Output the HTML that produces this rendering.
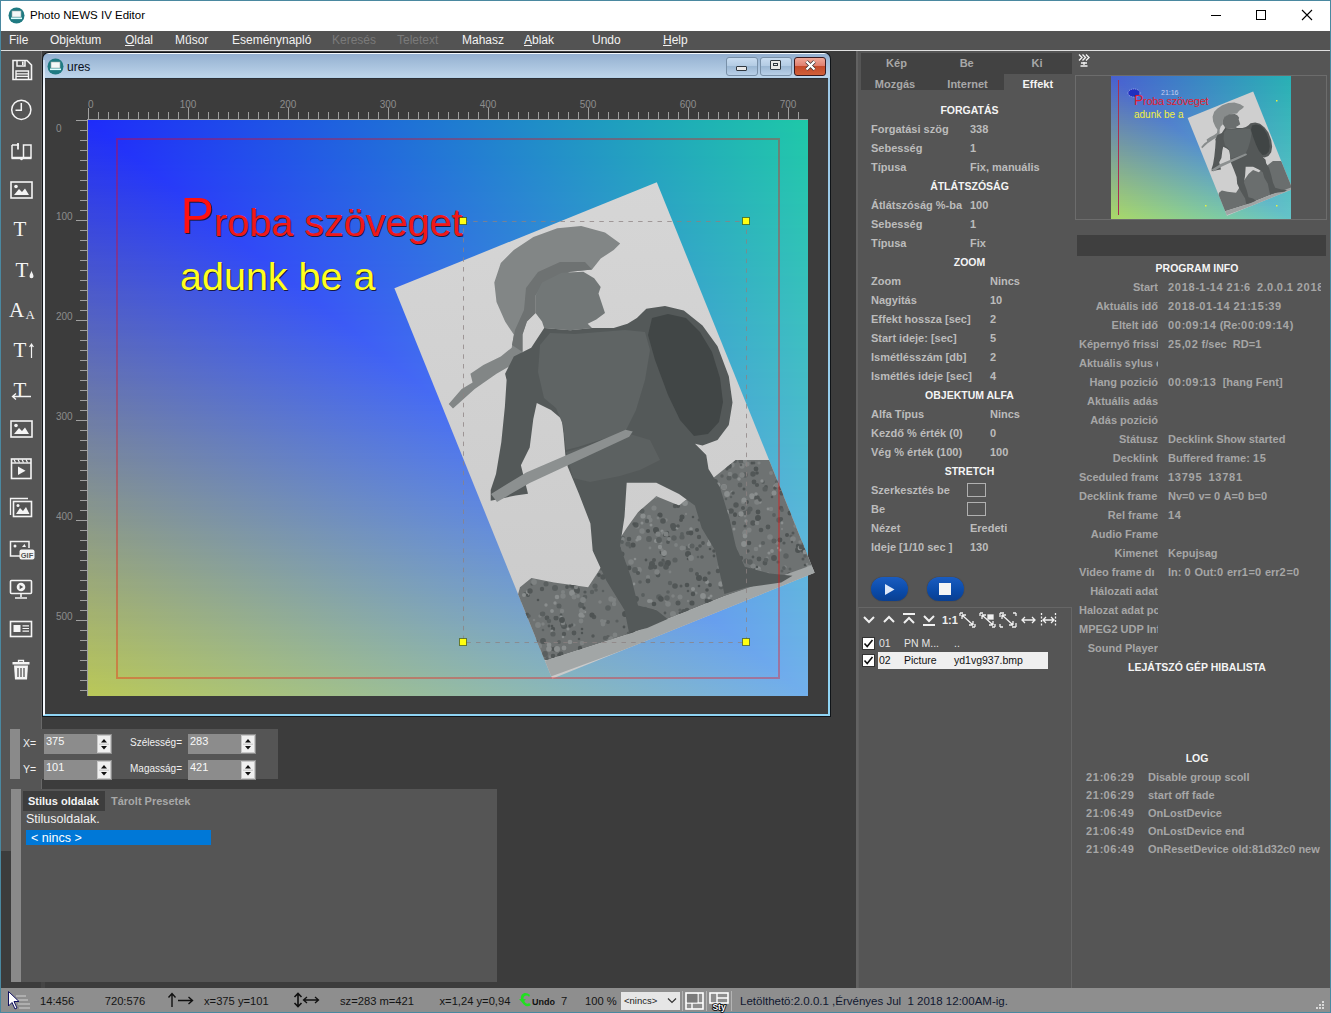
<!DOCTYPE html><html><head><meta charset="utf-8"><title>Photo NEWS IV Editor</title><style>
*{margin:0;padding:0;box-sizing:border-box}
html,body{width:1331px;height:1013px;overflow:hidden;background:#3c3c3c;font-family:"Liberation Sans",sans-serif;position:relative}
.a{position:absolute}
.t{position:absolute;white-space:nowrap;line-height:14px;font-size:12px}
.b{font-weight:bold}
.pl{position:absolute;white-space:nowrap;line-height:14px;font-size:11px;font-weight:bold;color:#bcbcbc}
.ph{position:absolute;white-space:nowrap;line-height:14px;font-size:10.5px;font-weight:bold;color:#f4f4f4;text-align:center}
.il{position:absolute;white-space:pre;line-height:14px;font-size:11px;font-weight:bold;color:#a6a6a6}
svg{position:absolute;overflow:visible}
</style></head><body>
<div class="a" style="left:0px;top:0px;width:1331px;height:1013px;background:#4a88a0;"></div>
<div class="a" style="left:1px;top:1px;width:1329px;height:1011px;background:#3c3c3c;"></div>
<div class="a" style="left:1px;top:1px;width:1329px;height:30px;background:#fff;"></div>
<svg style="left:8px;top:7px" width="17" height="17" viewBox="0 0 17 17">
<circle cx="8.5" cy="8.5" r="8" fill="#1f7a82"/>
<rect x="4" y="4" width="9" height="6" fill="#f4f8f8" stroke="#9aa" stroke-width="0.6"/>
<rect x="3" y="10.5" width="11" height="1.6" fill="#dff"/>
</svg>
<div class="t" style="left:30px;top:8px;color:#000;font-size:11.5px;">Photo NEWS IV Editor</div>
<div class="a" style="left:1211px;top:15px;width:10px;height:1px;background:#000;"></div>
<div class="a" style="left:1256px;top:10px;width:10px;height:10px;background:transparent;border:1px solid #000"></div>
<svg style="left:1301px;top:9.3px" width="12" height="12" viewBox="0 0 12 12"><path d="M1 1L11 11M11 1L1 11" stroke="#000" stroke-width="1.1"/></svg>
<div class="a" style="left:1px;top:31px;width:1329px;height:19px;background:#535353;"></div>
<div class="a" style="left:1px;top:50px;width:1329px;height:1px;background:#e0e0e0;"></div>
<div class="t" style="left:9px;top:33px;color:#f2f2f2;font-size:12px;">File</div>
<div class="t" style="left:50px;top:33px;color:#f2f2f2;font-size:12px;">Objektum</div>
<div class="t" style="left:125px;top:33px;color:#f2f2f2;font-size:12px;"><span style="text-decoration:underline">O</span>ldal</div>
<div class="t" style="left:175px;top:33px;color:#f2f2f2;font-size:12px;">Műsor</div>
<div class="t" style="left:232px;top:33px;color:#f2f2f2;font-size:12px;">Eseménynapló</div>
<div class="t" style="left:332px;top:33px;color:#7a7a7a;font-size:12px;">Keresés</div>
<div class="t" style="left:397px;top:33px;color:#7a7a7a;font-size:12px;">Teletext</div>
<div class="t" style="left:462px;top:33px;color:#f2f2f2;font-size:12px;">Mahasz</div>
<div class="t" style="left:524px;top:33px;color:#f2f2f2;font-size:12px;"><span style="text-decoration:underline">A</span>blak</div>
<div class="t" style="left:592px;top:33px;color:#f2f2f2;font-size:12px;">Undo</div>
<div class="t" style="left:663px;top:33px;color:#f2f2f2;font-size:12px;"><span style="text-decoration:underline">H</span>elp</div>
<div class="a" style="left:1px;top:51px;width:41px;height:800px;background:#555;"></div>
<div class="a" style="left:41px;top:51px;width:1px;height:800px;background:#686868;"></div>
<svg style="left:11px;top:59px" width="22" height="22" viewBox="0 0 22 22"><path d="M2 1.5H16L20.5 6V20.5H2Z" fill="none" stroke="#f4f4f4" stroke-width="1.6"/><path d="M6 1.5V7H14V1.5" fill="none" stroke="#f4f4f4" stroke-width="1.5"/><rect x="11" y="2.5" width="1.6" height="3.5" fill="#f4f4f4"/><path d="M5 20V12H17.5V20" fill="none" stroke="#f4f4f4" stroke-width="1.4"/><path d="M5 14.8H17.5M5 17.4H17.5" stroke="#f4f4f4" stroke-width="1.2"/></svg>
<svg style="left:10px;top:99px" width="23" height="23" viewBox="0 0 23 23"><circle cx="11.3" cy="10.8" r="9.6" fill="none" stroke="#f4f4f4" stroke-width="1.5"/><path d="M11.3 4V11.3H5.5" fill="none" stroke="#f4f4f4" stroke-width="1.5"/></svg>
<svg style="left:10px;top:141px" width="23" height="20" viewBox="0 0 23 20"><path d="M2 4V16.5H21V4H13.5V16.5M9 4H2" fill="none" stroke="#f4f4f4" stroke-width="1.5"/><path d="M8 2V8.5" stroke="#f4f4f4" stroke-width="1.8"/><path d="M1.5 17.5H21.5" stroke="#f4f4f4" stroke-width="1.4"/><circle cx="11.5" cy="18" r="1.3" fill="#f4f4f4"/></svg>
<svg style="left:10px;top:181px" width="23" height="18" viewBox="0 0 23 18"><rect x="1" y="1" width="21" height="16" fill="none" stroke="#f4f4f4" stroke-width="1.6"/><circle cx="6" cy="5.5" r="1.8" fill="#f4f4f4"/><path d="M4 14L9 8L12 11L15 7.5L19 14Z" fill="#f4f4f4"/></svg>
<div class="t" style="left:13.5px;top:219px;font-family:'Liberation Serif',serif;font-size:21px;line-height:21px;color:#f4f4f4">T</div>
<div class="t" style="left:15.5px;top:260px;font-family:'Liberation Serif',serif;font-size:21px;line-height:21px;color:#f4f4f4">T</div>
<svg style="left:29px;top:270px" width="5" height="9" viewBox="0 0 5 9"><path d="M2.5 0.5C2.5 2 0.5 4.5 0.5 6.2A2 2 0 0 0 4.5 6.2C4.5 4.5 2.5 2 2.5 0.5Z" fill="#f4f4f4"/></svg>
<div class="t" style="left:9px;top:300px;font-family:'Liberation Serif',serif;font-size:21px;line-height:21px;color:#f4f4f4">A</div>
<div class="t" style="left:25.5px;top:307.5px;font-family:'Liberation Serif',serif;font-size:13px;line-height:13px;color:#f4f4f4">A</div>
<div class="t" style="left:13.5px;top:339.5px;font-family:'Liberation Serif',serif;font-size:21px;line-height:21px;color:#f4f4f4">T</div>
<svg style="left:29px;top:343px" width="5" height="16" viewBox="0 0 5 16"><path d="M2.5 15V1.5M0.6 4L2.5 1L4.4 4" fill="none" stroke="#f4f4f4" stroke-width="1.2"/></svg>
<div class="t" style="left:13.5px;top:379.5px;font-family:'Liberation Serif',serif;font-size:21px;line-height:21px;color:#f4f4f4">T</div>
<svg style="left:11px;top:392px" width="21" height="8" viewBox="0 0 21 8"><path d="M2 4.5H20M5 1.5L1.5 4.5L5 7.5" fill="none" stroke="#f4f4f4" stroke-width="1.3"/></svg>
<svg style="left:10px;top:420px" width="23" height="18" viewBox="0 0 23 18"><rect x="1" y="1" width="21" height="16" fill="none" stroke="#f4f4f4" stroke-width="1.6"/><circle cx="6" cy="5.5" r="1.8" fill="#f4f4f4"/><path d="M4 14L9 8L12 11L15 7.5L19 14Z" fill="#f4f4f4"/></svg>
<svg style="left:10px;top:458px" width="23" height="22" viewBox="0 0 23 22"><rect x="1.5" y="1" width="19.5" height="19.5" fill="none" stroke="#f4f4f4" stroke-width="1.6"/><path d="M1.5 5H21" stroke="#f4f4f4" stroke-width="1.4"/><path d="M4 1.5L5.5 4.5M8 1.5L9.5 4.5M12 1.5L13.5 4.5M16 1.5L17.5 4.5" stroke="#f4f4f4" stroke-width="1.2"/><path d="M8 8.5V17L15.5 12.75Z" fill="#f4f4f4"/></svg>
<svg style="left:9px;top:497px" width="24" height="21" viewBox="0 0 24 21"><path d="M1.5 18V1.5H19" fill="none" stroke="#f4f4f4" stroke-width="1.3"/><rect x="4.5" y="4.5" width="18" height="15" fill="none" stroke="#f4f4f4" stroke-width="1.6"/><circle cx="9" cy="8.5" r="1.5" fill="#f4f4f4"/><path d="M7 17L11 11L14 14L17 10L20.5 17Z" fill="#f4f4f4"/></svg>
<svg style="left:9px;top:540px" width="26" height="20" viewBox="0 0 26 20"><path d="M12 16H1.5V1.5H20V8" fill="none" stroke="#f4f4f4" stroke-width="1.5" stroke-dasharray="0"/><circle cx="6" cy="6" r="1.5" fill="#f4f4f4"/><path d="M13 7L15.5 4L17 7Z" fill="#f4f4f4"/><rect x="10.5" y="9.5" width="15" height="10" rx="2" fill="#f4f4f4"/><text x="18" y="17.8" text-anchor="middle" font-family="Liberation Sans" font-weight="bold" font-size="7.5" fill="#555">GIF</text></svg>
<svg style="left:9px;top:579px" width="24" height="21" viewBox="0 0 24 21"><rect x="1.5" y="1.5" width="21" height="13" rx="1" fill="none" stroke="#f4f4f4" stroke-width="1.6"/><path d="M12 15V18M6 19H18" stroke="#f4f4f4" stroke-width="1.6"/><circle cx="12" cy="8" r="4.3" fill="#f4f4f4"/><path d="M10.6 5.8V10.2L14.2 8Z" fill="#555"/></svg>
<svg style="left:9px;top:620px" width="24" height="19" viewBox="0 0 24 19"><rect x="1.5" y="1.5" width="21" height="15" fill="none" stroke="#f4f4f4" stroke-width="1.6"/><rect x="4.5" y="5" width="7" height="7" fill="#f4f4f4"/><path d="M13.5 5.8H20M13.5 8.5H20M13.5 11.2H20" stroke="#f4f4f4" stroke-width="1.2"/></svg>
<svg style="left:11px;top:659px" width="20" height="22" viewBox="0 0 20 22"><path d="M7.5 3V1.5H12.5V3" fill="none" stroke="#f4f4f4" stroke-width="1.3"/><rect x="1.5" y="3" width="17" height="2.5" fill="#f4f4f4"/><path d="M3 6.5H17L16 20.5H4Z" fill="#f4f4f4"/><path d="M7 9V18M10 9V18M13 9V18" stroke="#555" stroke-width="1.3"/></svg>
<div class="a" style="left:42px;top:52px;width:789px;height:665px;background:#101418;border-radius:7px 7px 0 0"></div>
<div class="a" style="left:43px;top:53px;width:787px;height:663px;background:linear-gradient(#f4f8fc 0,#f4f8fc 1px,#94b0d0 1px,#bcd4ea 24px,#9ec8e6 26px,#8fd4f4 100%);border-radius:6px 6px 0 0"></div>
<div class="a" style="left:43px;top:60px;width:2px;height:655px;background:linear-gradient(#c8dcf0,#f4f8fc 30px,#f4f8fc);"></div>
<div class="a" style="left:45px;top:78px;width:783px;height:636px;background:#3c3c3c;"></div>
<div class="a" style="left:45px;top:78px;width:783px;height:1px;background:#2c3036;"></div>
<svg style="left:47px;top:58px" width="17" height="17" viewBox="0 0 17 17">
<circle cx="8.5" cy="8.5" r="8" fill="#1f7a82"/>
<rect x="4" y="4" width="9" height="6" fill="#f4f8f8" stroke="#9aa" stroke-width="0.6"/>
<rect x="3" y="10.5" width="11" height="1.6" fill="#dff"/>
</svg>
<div class="t" style="left:67px;top:60px;color:#0a1020;font-size:12px;">ures</div>
<div class="a" style="left:726px;top:57px;width:32px;height:19px;background:linear-gradient(#c8dcf0 0,#b4cce4 45%,#9cb8d4 50%,#b8d0e8 100%);border:1px solid #7890a8;border-radius:3px"></div>
<div class="a" style="left:736px;top:66px;width:11px;height:5px;background:#e8e8e8;border:1px solid #303840;border-radius:1px"></div>
<div class="a" style="left:760px;top:57px;width:32px;height:19px;background:linear-gradient(#c8dcf0 0,#b4cce4 45%,#9cb8d4 50%,#b8d0e8 100%);border:1px solid #7890a8;border-radius:3px"></div>
<div class="a" style="left:770px;top:60px;width:11px;height:10px;background:#e8e8e8;border:1px solid #303840;border-radius:1px"></div>
<div class="a" style="left:773px;top:63px;width:5px;height:3px;background:#e8e8e8;border:1px solid #303840"></div>
<div class="a" style="left:794px;top:57px;width:32px;height:19px;background:linear-gradient(#f0a898 0,#e08070 45%,#c44a2a 50%,#d0603a 100%);border:1px solid #3a1a20;border-radius:3px"></div>
<svg style="left:805px;top:60px" width="11" height="11" viewBox="0 0 11 11"><path d="M1.5 1.5L9.5 9.5M9.5 1.5L1.5 9.5" stroke="#2a2a2a" stroke-width="3.6"/><path d="M1.5 1.5L9.5 9.5M9.5 1.5L1.5 9.5" stroke="#fff" stroke-width="2.4"/></svg>
<svg style="left:0;top:0" width="1331" height="1013"><g fill="#a0a0a0"><rect x="88" y="108" width="1" height="11"/><rect x="98" y="112" width="1" height="7"/><rect x="108" y="112" width="1" height="7"/><rect x="118" y="112" width="1" height="7"/><rect x="128" y="112" width="1" height="7"/><rect x="138" y="112" width="1" height="7"/><rect x="148" y="112" width="1" height="7"/><rect x="158" y="112" width="1" height="7"/><rect x="168" y="112" width="1" height="7"/><rect x="178" y="112" width="1" height="7"/><rect x="188" y="108" width="1" height="11"/><rect x="198" y="112" width="1" height="7"/><rect x="208" y="112" width="1" height="7"/><rect x="218" y="112" width="1" height="7"/><rect x="228" y="112" width="1" height="7"/><rect x="238" y="112" width="1" height="7"/><rect x="248" y="112" width="1" height="7"/><rect x="258" y="112" width="1" height="7"/><rect x="268" y="112" width="1" height="7"/><rect x="278" y="112" width="1" height="7"/><rect x="288" y="108" width="1" height="11"/><rect x="298" y="112" width="1" height="7"/><rect x="308" y="112" width="1" height="7"/><rect x="318" y="112" width="1" height="7"/><rect x="328" y="112" width="1" height="7"/><rect x="338" y="112" width="1" height="7"/><rect x="348" y="112" width="1" height="7"/><rect x="358" y="112" width="1" height="7"/><rect x="368" y="112" width="1" height="7"/><rect x="378" y="112" width="1" height="7"/><rect x="388" y="108" width="1" height="11"/><rect x="398" y="112" width="1" height="7"/><rect x="408" y="112" width="1" height="7"/><rect x="418" y="112" width="1" height="7"/><rect x="428" y="112" width="1" height="7"/><rect x="438" y="112" width="1" height="7"/><rect x="448" y="112" width="1" height="7"/><rect x="458" y="112" width="1" height="7"/><rect x="468" y="112" width="1" height="7"/><rect x="478" y="112" width="1" height="7"/><rect x="488" y="108" width="1" height="11"/><rect x="498" y="112" width="1" height="7"/><rect x="508" y="112" width="1" height="7"/><rect x="518" y="112" width="1" height="7"/><rect x="528" y="112" width="1" height="7"/><rect x="538" y="112" width="1" height="7"/><rect x="548" y="112" width="1" height="7"/><rect x="558" y="112" width="1" height="7"/><rect x="568" y="112" width="1" height="7"/><rect x="578" y="112" width="1" height="7"/><rect x="588" y="108" width="1" height="11"/><rect x="598" y="112" width="1" height="7"/><rect x="608" y="112" width="1" height="7"/><rect x="618" y="112" width="1" height="7"/><rect x="628" y="112" width="1" height="7"/><rect x="638" y="112" width="1" height="7"/><rect x="648" y="112" width="1" height="7"/><rect x="658" y="112" width="1" height="7"/><rect x="668" y="112" width="1" height="7"/><rect x="678" y="112" width="1" height="7"/><rect x="688" y="108" width="1" height="11"/><rect x="698" y="112" width="1" height="7"/><rect x="708" y="112" width="1" height="7"/><rect x="718" y="112" width="1" height="7"/><rect x="728" y="112" width="1" height="7"/><rect x="738" y="112" width="1" height="7"/><rect x="748" y="112" width="1" height="7"/><rect x="758" y="112" width="1" height="7"/><rect x="768" y="112" width="1" height="7"/><rect x="778" y="112" width="1" height="7"/><rect x="788" y="108" width="1" height="11"/><rect x="798" y="112" width="1" height="7"/><rect x="76" y="120" width="12" height="1"/><rect x="80" y="130" width="8" height="1"/><rect x="80" y="140" width="8" height="1"/><rect x="80" y="150" width="8" height="1"/><rect x="80" y="160" width="8" height="1"/><rect x="80" y="170" width="8" height="1"/><rect x="80" y="180" width="8" height="1"/><rect x="80" y="190" width="8" height="1"/><rect x="80" y="200" width="8" height="1"/><rect x="80" y="210" width="8" height="1"/><rect x="76" y="220" width="12" height="1"/><rect x="80" y="230" width="8" height="1"/><rect x="80" y="240" width="8" height="1"/><rect x="80" y="250" width="8" height="1"/><rect x="80" y="260" width="8" height="1"/><rect x="80" y="270" width="8" height="1"/><rect x="80" y="280" width="8" height="1"/><rect x="80" y="290" width="8" height="1"/><rect x="80" y="300" width="8" height="1"/><rect x="80" y="310" width="8" height="1"/><rect x="76" y="320" width="12" height="1"/><rect x="80" y="330" width="8" height="1"/><rect x="80" y="340" width="8" height="1"/><rect x="80" y="350" width="8" height="1"/><rect x="80" y="360" width="8" height="1"/><rect x="80" y="370" width="8" height="1"/><rect x="80" y="380" width="8" height="1"/><rect x="80" y="390" width="8" height="1"/><rect x="80" y="400" width="8" height="1"/><rect x="80" y="410" width="8" height="1"/><rect x="76" y="420" width="12" height="1"/><rect x="80" y="430" width="8" height="1"/><rect x="80" y="440" width="8" height="1"/><rect x="80" y="450" width="8" height="1"/><rect x="80" y="460" width="8" height="1"/><rect x="80" y="470" width="8" height="1"/><rect x="80" y="480" width="8" height="1"/><rect x="80" y="490" width="8" height="1"/><rect x="80" y="500" width="8" height="1"/><rect x="80" y="510" width="8" height="1"/><rect x="76" y="520" width="12" height="1"/><rect x="80" y="530" width="8" height="1"/><rect x="80" y="540" width="8" height="1"/><rect x="80" y="550" width="8" height="1"/><rect x="80" y="560" width="8" height="1"/><rect x="80" y="570" width="8" height="1"/><rect x="80" y="580" width="8" height="1"/><rect x="80" y="590" width="8" height="1"/><rect x="80" y="600" width="8" height="1"/><rect x="80" y="610" width="8" height="1"/><rect x="76" y="620" width="12" height="1"/><rect x="80" y="630" width="8" height="1"/><rect x="80" y="640" width="8" height="1"/><rect x="80" y="650" width="8" height="1"/><rect x="80" y="660" width="8" height="1"/><rect x="80" y="670" width="8" height="1"/><rect x="80" y="680" width="8" height="1"/><rect x="80" y="690" width="8" height="1"/><rect x="87" y="119" width="721" height="1"/><rect x="87" y="119" width="1" height="577"/></g></svg>
<div class="t" style="left:88px;top:98.5px;color:#8c8c8c;font-size:10px;line-height:12px">0</div>
<div class="t" style="left:168px;top:98.5px;width:40px;text-align:center;color:#8c8c8c;font-size:10px;line-height:12px">100</div>
<div class="t" style="left:268px;top:98.5px;width:40px;text-align:center;color:#8c8c8c;font-size:10px;line-height:12px">200</div>
<div class="t" style="left:368px;top:98.5px;width:40px;text-align:center;color:#8c8c8c;font-size:10px;line-height:12px">300</div>
<div class="t" style="left:468px;top:98.5px;width:40px;text-align:center;color:#8c8c8c;font-size:10px;line-height:12px">400</div>
<div class="t" style="left:568px;top:98.5px;width:40px;text-align:center;color:#8c8c8c;font-size:10px;line-height:12px">500</div>
<div class="t" style="left:668px;top:98.5px;width:40px;text-align:center;color:#8c8c8c;font-size:10px;line-height:12px">600</div>
<div class="t" style="left:768px;top:98.5px;width:40px;text-align:center;color:#8c8c8c;font-size:10px;line-height:12px">700</div>
<div class="t" style="left:56px;top:122.5px;color:#8c8c8c;font-size:10px;line-height:12px">0</div>
<div class="t" style="left:56px;top:210.5px;color:#8c8c8c;font-size:10px;line-height:12px">100</div>
<div class="t" style="left:56px;top:310.5px;color:#8c8c8c;font-size:10px;line-height:12px">200</div>
<div class="t" style="left:56px;top:410.5px;color:#8c8c8c;font-size:10px;line-height:12px">300</div>
<div class="t" style="left:56px;top:510.5px;color:#8c8c8c;font-size:10px;line-height:12px">400</div>
<div class="t" style="left:56px;top:610.5px;color:#8c8c8c;font-size:10px;line-height:12px">500</div>
<div class="a" style="left:88px;top:120px;width:720px;height:576px;overflow:hidden">
<div class="a" style="left:0;top:0px;width:720px;height:3px;background:linear-gradient(90deg,#1e2cfa,#1e2cfa 0.26%,#1ec8a8)"></div>
<div class="a" style="left:0;top:3px;width:720px;height:3px;background:linear-gradient(90deg,#1f2df9,#1f2dfa 0.78%,#1fc8a9)"></div>
<div class="a" style="left:0;top:6px;width:720px;height:3px;background:linear-gradient(90deg,#202ef8,#1f2efa 1.30%,#1fc8a9)"></div>
<div class="a" style="left:0;top:9px;width:720px;height:3px;background:linear-gradient(90deg,#212ff7,#202efa 1.82%,#20c8a9)"></div>
<div class="a" style="left:0;top:12px;width:720px;height:3px;background:linear-gradient(90deg,#2230f6,#202ffa 2.34%,#20c7aa)"></div>
<div class="a" style="left:0;top:15px;width:720px;height:3px;background:linear-gradient(90deg,#2230f5,#2030fa 2.86%,#20c7aa)"></div>
<div class="a" style="left:0;top:18px;width:720px;height:3px;background:linear-gradient(90deg,#2331f5,#2130fa 3.39%,#21c7aa)"></div>
<div class="a" style="left:0;top:21px;width:720px;height:3px;background:linear-gradient(90deg,#2432f4,#2131f9 3.91%,#21c7ab)"></div>
<div class="a" style="left:0;top:24px;width:720px;height:3px;background:linear-gradient(90deg,#2533f3,#2232f9 4.43%,#22c7ab)"></div>
<div class="a" style="left:0;top:27px;width:720px;height:3px;background:linear-gradient(90deg,#2634f2,#2233f9 4.95%,#22c7ab)"></div>
<div class="a" style="left:0;top:30px;width:720px;height:3px;background:linear-gradient(90deg,#2735f1,#2333f9 5.47%,#23c7ac)"></div>
<div class="a" style="left:0;top:33px;width:720px;height:3px;background:linear-gradient(90deg,#2735f0,#2334f9 5.99%,#23c7ac)"></div>
<div class="a" style="left:0;top:36px;width:720px;height:3px;background:linear-gradient(90deg,#2836ef,#2335f9 6.51%,#23c6ac)"></div>
<div class="a" style="left:0;top:39px;width:720px;height:3px;background:linear-gradient(90deg,#2937ef,#2435f9 7.03%,#24c6ad)"></div>
<div class="a" style="left:0;top:42px;width:720px;height:3px;background:linear-gradient(90deg,#2a38ee,#2436f9 7.55%,#24c6ad)"></div>
<div class="a" style="left:0;top:45px;width:720px;height:3px;background:linear-gradient(90deg,#2b39ed,#2537f9 8.07%,#25c6ad)"></div>
<div class="a" style="left:0;top:48px;width:720px;height:3px;background:linear-gradient(90deg,#2b39ec,#2537f9 8.59%,#25c6ae)"></div>
<div class="a" style="left:0;top:51px;width:720px;height:3px;background:linear-gradient(90deg,#2c3aeb,#2638f9 9.11%,#26c6ae)"></div>
<div class="a" style="left:0;top:54px;width:720px;height:3px;background:linear-gradient(90deg,#2d3bea,#2639f9 9.64%,#26c6af)"></div>
<div class="a" style="left:0;top:57px;width:720px;height:3px;background:linear-gradient(90deg,#2e3cea,#2739f9 10.16%,#27c6af)"></div>
<div class="a" style="left:0;top:60px;width:720px;height:3px;background:linear-gradient(90deg,#2f3de9,#273af9 10.68%,#27c5af)"></div>
<div class="a" style="left:0;top:63px;width:720px;height:3px;background:linear-gradient(90deg,#2f3de8,#273bf8 11.20%,#27c5b0)"></div>
<div class="a" style="left:0;top:66px;width:720px;height:3px;background:linear-gradient(90deg,#303ee7,#283bf8 11.72%,#28c5b0)"></div>
<div class="a" style="left:0;top:69px;width:720px;height:3px;background:linear-gradient(90deg,#313fe6,#283cf8 12.24%,#28c5b0)"></div>
<div class="a" style="left:0;top:72px;width:720px;height:3px;background:linear-gradient(90deg,#3240e5,#293df8 12.76%,#29c5b1)"></div>
<div class="a" style="left:0;top:75px;width:720px;height:3px;background:linear-gradient(90deg,#3341e4,#293ef8 13.28%,#29c5b1)"></div>
<div class="a" style="left:0;top:78px;width:720px;height:3px;background:linear-gradient(90deg,#3442e4,#2a3ef8 13.80%,#2ac5b1)"></div>
<div class="a" style="left:0;top:81px;width:720px;height:3px;background:linear-gradient(90deg,#3442e3,#2a3ff8 14.32%,#2ac5b2)"></div>
<div class="a" style="left:0;top:84px;width:720px;height:3px;background:linear-gradient(90deg,#3543e2,#2a40f8 14.84%,#2ac4b2)"></div>
<div class="a" style="left:0;top:87px;width:720px;height:3px;background:linear-gradient(90deg,#3644e1,#2b40f8 15.36%,#2bc4b2)"></div>
<div class="a" style="left:0;top:90px;width:720px;height:3px;background:linear-gradient(90deg,#3745e0,#2b41f8 15.89%,#2bc4b3)"></div>
<div class="a" style="left:0;top:93px;width:720px;height:3px;background:linear-gradient(90deg,#3846df,#2c42f8 16.41%,#2cc4b3)"></div>
<div class="a" style="left:0;top:96px;width:720px;height:3px;background:linear-gradient(90deg,#3846df,#2c42f8 16.93%,#2cc4b4)"></div>
<div class="a" style="left:0;top:99px;width:720px;height:3px;background:linear-gradient(90deg,#3947de,#2d43f8 17.45%,#2dc4b4)"></div>
<div class="a" style="left:0;top:102px;width:720px;height:3px;background:linear-gradient(90deg,#3a48dd,#2d44f7 17.97%,#2dc4b4)"></div>
<div class="a" style="left:0;top:105px;width:720px;height:3px;background:linear-gradient(90deg,#3b49dc,#2e44f7 18.49%,#2ec4b5)"></div>
<div class="a" style="left:0;top:108px;width:720px;height:3px;background:linear-gradient(90deg,#3c4adb,#2e45f7 19.01%,#2ec3b5)"></div>
<div class="a" style="left:0;top:111px;width:720px;height:3px;background:linear-gradient(90deg,#3c4ada,#2e46f7 19.53%,#2ec3b5)"></div>
<div class="a" style="left:0;top:114px;width:720px;height:3px;background:linear-gradient(90deg,#3d4bda,#2f46f7 20.05%,#2fc3b6)"></div>
<div class="a" style="left:0;top:117px;width:720px;height:3px;background:linear-gradient(90deg,#3e4cd9,#2f47f7 20.57%,#2fc3b6)"></div>
<div class="a" style="left:0;top:120px;width:720px;height:3px;background:linear-gradient(90deg,#3f4dd8,#3048f7 21.09%,#30c3b6)"></div>
<div class="a" style="left:0;top:123px;width:720px;height:3px;background:linear-gradient(90deg,#404ed7,#3049f7 21.61%,#30c3b7)"></div>
<div class="a" style="left:0;top:126px;width:720px;height:3px;background:linear-gradient(90deg,#414fd6,#3149f7 22.14%,#31c3b7)"></div>
<div class="a" style="left:0;top:129px;width:720px;height:3px;background:linear-gradient(90deg,#414fd5,#314af7 22.66%,#31c3b7)"></div>
<div class="a" style="left:0;top:132px;width:720px;height:3px;background:linear-gradient(90deg,#4250d4,#314bf7 23.18%,#31c2b8)"></div>
<div class="a" style="left:0;top:135px;width:720px;height:3px;background:linear-gradient(90deg,#4351d4,#324bf7 23.70%,#32c2b8)"></div>
<div class="a" style="left:0;top:138px;width:720px;height:3px;background:linear-gradient(90deg,#4452d3,#324cf7 24.22%,#32c2b8)"></div>
<div class="a" style="left:0;top:141px;width:720px;height:3px;background:linear-gradient(90deg,#4553d2,#334df7 24.74%,#33c2b9)"></div>
<div class="a" style="left:0;top:144px;width:720px;height:3px;background:linear-gradient(90deg,#4553d1,#334df6 25.26%,#33c2b9)"></div>
<div class="a" style="left:0;top:147px;width:720px;height:3px;background:linear-gradient(90deg,#4654d0,#344ef6 25.78%,#34c2ba)"></div>
<div class="a" style="left:0;top:150px;width:720px;height:3px;background:linear-gradient(90deg,#4755cf,#344ff6 26.30%,#34c2ba)"></div>
<div class="a" style="left:0;top:153px;width:720px;height:3px;background:linear-gradient(90deg,#4856cf,#354ff6 26.82%,#35c2ba)"></div>
<div class="a" style="left:0;top:156px;width:720px;height:3px;background:linear-gradient(90deg,#4957ce,#3550f6 27.34%,#35c1bb)"></div>
<div class="a" style="left:0;top:159px;width:720px;height:3px;background:linear-gradient(90deg,#4957cd,#3551f6 27.86%,#35c1bb)"></div>
<div class="a" style="left:0;top:162px;width:720px;height:3px;background:linear-gradient(90deg,#4a58cc,#3651f6 28.39%,#36c1bb)"></div>
<div class="a" style="left:0;top:165px;width:720px;height:3px;background:linear-gradient(90deg,#4b59cb,#3652f6 28.91%,#36c1bc)"></div>
<div class="a" style="left:0;top:168px;width:720px;height:3px;background:linear-gradient(90deg,#4c5aca,#3753f6 29.43%,#37c1bc)"></div>
<div class="a" style="left:0;top:171px;width:720px;height:3px;background:linear-gradient(90deg,#4d5bc9,#3754f6 29.95%,#37c1bc)"></div>
<div class="a" style="left:0;top:174px;width:720px;height:3px;background:linear-gradient(90deg,#4e5cc9,#3854f6 30.47%,#38c1bd)"></div>
<div class="a" style="left:0;top:177px;width:720px;height:3px;background:linear-gradient(90deg,#4e5cc8,#3855f6 30.99%,#38c1bd)"></div>
<div class="a" style="left:0;top:180px;width:720px;height:3px;background:linear-gradient(90deg,#4f5dc7,#3856f6 31.51%,#38c0bd)"></div>
<div class="a" style="left:0;top:183px;width:720px;height:3px;background:linear-gradient(90deg,#505ec6,#3956f6 32.03%,#39c0be)"></div>
<div class="a" style="left:0;top:186px;width:720px;height:3px;background:linear-gradient(90deg,#515fc5,#3957f5 32.55%,#39c0be)"></div>
<div class="a" style="left:0;top:189px;width:720px;height:3px;background:linear-gradient(90deg,#5260c4,#3a58f5 33.07%,#3ac0be)"></div>
<div class="a" style="left:0;top:192px;width:720px;height:3px;background:linear-gradient(90deg,#5260c4,#3a58f5 33.59%,#3ac0bf)"></div>
<div class="a" style="left:0;top:195px;width:720px;height:3px;background:linear-gradient(90deg,#5361c3,#3b59f5 34.11%,#3bc0bf)"></div>
<div class="a" style="left:0;top:198px;width:720px;height:3px;background:linear-gradient(90deg,#5462c2,#3b5af5 34.64%,#3bc0c0)"></div>
<div class="a" style="left:0;top:201px;width:720px;height:3px;background:linear-gradient(90deg,#5563c1,#3c5af5 35.16%,#3cc0c0)"></div>
<div class="a" style="left:0;top:204px;width:720px;height:3px;background:linear-gradient(90deg,#5664c0,#3c5bf5 35.68%,#3cbfc0)"></div>
<div class="a" style="left:0;top:207px;width:720px;height:3px;background:linear-gradient(90deg,#5664bf,#3c5cf5 36.20%,#3cbfc1)"></div>
<div class="a" style="left:0;top:210px;width:720px;height:3px;background:linear-gradient(90deg,#5765bf,#3d5cf5 36.72%,#3dbfc1)"></div>
<div class="a" style="left:0;top:213px;width:720px;height:3px;background:linear-gradient(90deg,#5866be,#3d5df5 37.24%,#3dbfc1)"></div>
<div class="a" style="left:0;top:216px;width:720px;height:3px;background:linear-gradient(90deg,#5967bd,#3e5ef5 37.76%,#3ebfc2)"></div>
<div class="a" style="left:0;top:219px;width:720px;height:3px;background:linear-gradient(90deg,#5a68bc,#3e5ff5 38.28%,#3ebfc2)"></div>
<div class="a" style="left:0;top:222px;width:720px;height:3px;background:linear-gradient(90deg,#5b69bb,#3f5ff5 38.80%,#3fbfc2)"></div>
<div class="a" style="left:0;top:225px;width:720px;height:3px;background:linear-gradient(90deg,#5b69ba,#3f60f4 39.32%,#3fbfc3)"></div>
<div class="a" style="left:0;top:228px;width:720px;height:3px;background:linear-gradient(90deg,#5c6ab9,#3f61f4 39.84%,#3fbec3)"></div>
<div class="a" style="left:0;top:231px;width:720px;height:3px;background:linear-gradient(90deg,#5d6bb9,#4061f4 40.36%,#40bec3)"></div>
<div class="a" style="left:0;top:234px;width:720px;height:3px;background:linear-gradient(90deg,#5e6cb8,#4062f4 40.89%,#40bec4)"></div>
<div class="a" style="left:0;top:237px;width:720px;height:3px;background:linear-gradient(90deg,#5f6db7,#4163f4 41.41%,#41bec4)"></div>
<div class="a" style="left:0;top:240px;width:720px;height:3px;background:linear-gradient(90deg,#5f6db6,#4163f4 41.93%,#41bec5)"></div>
<div class="a" style="left:0;top:243px;width:720px;height:3px;background:linear-gradient(90deg,#606eb5,#4264f4 42.45%,#42bec5)"></div>
<div class="a" style="left:0;top:246px;width:720px;height:3px;background:linear-gradient(90deg,#616fb4,#4265f4 42.97%,#42bec5)"></div>
<div class="a" style="left:0;top:249px;width:720px;height:3px;background:linear-gradient(90deg,#6270b4,#4365f4 43.49%,#43bec6)"></div>
<div class="a" style="left:0;top:252px;width:720px;height:3px;background:linear-gradient(90deg,#6371b3,#4366f4 44.01%,#43bdc6)"></div>
<div class="a" style="left:0;top:255px;width:720px;height:3px;background:linear-gradient(90deg,#6371b2,#4367f4 44.53%,#43bdc6)"></div>
<div class="a" style="left:0;top:258px;width:720px;height:3px;background:linear-gradient(90deg,#6472b1,#4467f4 45.05%,#44bdc7)"></div>
<div class="a" style="left:0;top:261px;width:720px;height:3px;background:linear-gradient(90deg,#6573b0,#4468f4 45.57%,#44bdc7)"></div>
<div class="a" style="left:0;top:264px;width:720px;height:3px;background:linear-gradient(90deg,#6674af,#4569f4 46.09%,#45bdc7)"></div>
<div class="a" style="left:0;top:267px;width:720px;height:3px;background:linear-gradient(90deg,#6775ae,#456af3 46.61%,#45bdc8)"></div>
<div class="a" style="left:0;top:270px;width:720px;height:3px;background:linear-gradient(90deg,#6876ae,#466af3 47.14%,#46bdc8)"></div>
<div class="a" style="left:0;top:273px;width:720px;height:3px;background:linear-gradient(90deg,#6876ad,#466bf3 47.66%,#46bdc8)"></div>
<div class="a" style="left:0;top:276px;width:720px;height:3px;background:linear-gradient(90deg,#6977ac,#466cf3 48.18%,#46bcc9)"></div>
<div class="a" style="left:0;top:279px;width:720px;height:3px;background:linear-gradient(90deg,#6a78ab,#476cf3 48.70%,#47bcc9)"></div>
<div class="a" style="left:0;top:282px;width:720px;height:3px;background:linear-gradient(90deg,#6b79aa,#476df3 49.22%,#47bcc9)"></div>
<div class="a" style="left:0;top:285px;width:720px;height:3px;background:linear-gradient(90deg,#6c7aa9,#486ef3 49.74%,#48bcca)"></div>
<div class="a" style="left:0;top:288px;width:720px;height:3px;background:linear-gradient(90deg,#6c7aa9,#486ef3 50.26%,#48bcca)"></div>
<div class="a" style="left:0;top:291px;width:720px;height:3px;background:linear-gradient(90deg,#6d7ba8,#496ff3 50.78%,#49bccb)"></div>
<div class="a" style="left:0;top:294px;width:720px;height:3px;background:linear-gradient(90deg,#6e7ca7,#4970f3 51.30%,#49bccb)"></div>
<div class="a" style="left:0;top:297px;width:720px;height:3px;background:linear-gradient(90deg,#6f7da6,#4a70f3 51.82%,#4abccb)"></div>
<div class="a" style="left:0;top:300px;width:720px;height:3px;background:linear-gradient(90deg,#707ea5,#4a71f3 52.34%,#4abbcc)"></div>
<div class="a" style="left:0;top:303px;width:720px;height:3px;background:linear-gradient(90deg,#707ea4,#4a72f3 52.86%,#4abbcc)"></div>
<div class="a" style="left:0;top:306px;width:720px;height:3px;background:linear-gradient(90deg,#717fa4,#4b72f3 53.39%,#4bbbcc)"></div>
<div class="a" style="left:0;top:309px;width:720px;height:3px;background:linear-gradient(90deg,#7280a3,#4b73f2 53.91%,#4bbbcd)"></div>
<div class="a" style="left:0;top:312px;width:720px;height:3px;background:linear-gradient(90deg,#7381a2,#4c74f2 54.43%,#4cbbcd)"></div>
<div class="a" style="left:0;top:315px;width:720px;height:3px;background:linear-gradient(90deg,#7482a1,#4c75f2 54.95%,#4cbbcd)"></div>
<div class="a" style="left:0;top:318px;width:720px;height:3px;background:linear-gradient(90deg,#7583a0,#4d75f2 55.47%,#4dbbce)"></div>
<div class="a" style="left:0;top:321px;width:720px;height:3px;background:linear-gradient(90deg,#75839f,#4d76f2 55.99%,#4dbbce)"></div>
<div class="a" style="left:0;top:324px;width:720px;height:3px;background:linear-gradient(90deg,#76849e,#4d77f2 56.51%,#4dbace)"></div>
<div class="a" style="left:0;top:327px;width:720px;height:3px;background:linear-gradient(90deg,#77859e,#4e77f2 57.03%,#4ebacf)"></div>
<div class="a" style="left:0;top:330px;width:720px;height:3px;background:linear-gradient(90deg,#78869d,#4e78f2 57.55%,#4ebacf)"></div>
<div class="a" style="left:0;top:333px;width:720px;height:3px;background:linear-gradient(90deg,#79879c,#4f79f2 58.07%,#4fbacf)"></div>
<div class="a" style="left:0;top:336px;width:720px;height:3px;background:linear-gradient(90deg,#79879b,#4f79f2 58.59%,#4fbad0)"></div>
<div class="a" style="left:0;top:339px;width:720px;height:3px;background:linear-gradient(90deg,#7a889a,#507af2 59.11%,#50bad0)"></div>
<div class="a" style="left:0;top:342px;width:720px;height:3px;background:linear-gradient(90deg,#7b8999,#507bf2 59.64%,#50bad1)"></div>
<div class="a" style="left:0;top:345px;width:720px;height:3px;background:linear-gradient(90deg,#7c8a99,#517bf2 60.16%,#51bad1)"></div>
<div class="a" style="left:0;top:348px;width:720px;height:3px;background:linear-gradient(90deg,#7d8b98,#517cf2 60.68%,#51b9d1)"></div>
<div class="a" style="left:0;top:351px;width:720px;height:3px;background:linear-gradient(90deg,#7d8b97,#517df1 61.20%,#51b9d2)"></div>
<div class="a" style="left:0;top:354px;width:720px;height:3px;background:linear-gradient(90deg,#7e8c96,#527df1 61.72%,#52b9d2)"></div>
<div class="a" style="left:0;top:357px;width:720px;height:3px;background:linear-gradient(90deg,#7f8d95,#527ef1 62.24%,#52b9d2)"></div>
<div class="a" style="left:0;top:360px;width:720px;height:3px;background:linear-gradient(90deg,#808e94,#537ff1 62.76%,#53b9d3)"></div>
<div class="a" style="left:0;top:363px;width:720px;height:3px;background:linear-gradient(90deg,#818f93,#5380f1 63.28%,#53b9d3)"></div>
<div class="a" style="left:0;top:366px;width:720px;height:3px;background:linear-gradient(90deg,#829093,#5480f1 63.80%,#54b9d3)"></div>
<div class="a" style="left:0;top:369px;width:720px;height:3px;background:linear-gradient(90deg,#829092,#5481f1 64.32%,#54b9d4)"></div>
<div class="a" style="left:0;top:372px;width:720px;height:3px;background:linear-gradient(90deg,#839191,#5482f1 64.84%,#54b8d4)"></div>
<div class="a" style="left:0;top:375px;width:720px;height:3px;background:linear-gradient(90deg,#849290,#5582f1 65.36%,#55b8d4)"></div>
<div class="a" style="left:0;top:378px;width:720px;height:3px;background:linear-gradient(90deg,#85938f,#5583f1 65.89%,#55b8d5)"></div>
<div class="a" style="left:0;top:381px;width:720px;height:3px;background:linear-gradient(90deg,#86948e,#5684f1 66.41%,#56b8d5)"></div>
<div class="a" style="left:0;top:384px;width:720px;height:3px;background:linear-gradient(90deg,#86948e,#5684f1 66.93%,#56b8d6)"></div>
<div class="a" style="left:0;top:387px;width:720px;height:3px;background:linear-gradient(90deg,#87958d,#5785f1 67.45%,#57b8d6)"></div>
<div class="a" style="left:0;top:390px;width:720px;height:3px;background:linear-gradient(90deg,#88968c,#5786f0 67.97%,#57b8d6)"></div>
<div class="a" style="left:0;top:393px;width:720px;height:3px;background:linear-gradient(90deg,#89978b,#5886f0 68.49%,#58b8d7)"></div>
<div class="a" style="left:0;top:396px;width:720px;height:3px;background:linear-gradient(90deg,#8a988a,#5887f0 69.01%,#58b7d7)"></div>
<div class="a" style="left:0;top:399px;width:720px;height:3px;background:linear-gradient(90deg,#8a9889,#5888f0 69.53%,#58b7d7)"></div>
<div class="a" style="left:0;top:402px;width:720px;height:3px;background:linear-gradient(90deg,#8b9989,#5988f0 70.05%,#59b7d8)"></div>
<div class="a" style="left:0;top:405px;width:720px;height:3px;background:linear-gradient(90deg,#8c9a88,#5989f0 70.57%,#59b7d8)"></div>
<div class="a" style="left:0;top:408px;width:720px;height:3px;background:linear-gradient(90deg,#8d9b87,#5a8af0 71.09%,#5ab7d8)"></div>
<div class="a" style="left:0;top:411px;width:720px;height:3px;background:linear-gradient(90deg,#8e9c86,#5a8bf0 71.61%,#5ab7d9)"></div>
<div class="a" style="left:0;top:414px;width:720px;height:3px;background:linear-gradient(90deg,#8f9d85,#5b8bf0 72.14%,#5bb7d9)"></div>
<div class="a" style="left:0;top:417px;width:720px;height:3px;background:linear-gradient(90deg,#8f9d84,#5b8cf0 72.66%,#5bb7d9)"></div>
<div class="a" style="left:0;top:420px;width:720px;height:3px;background:linear-gradient(90deg,#909e83,#5b8df0 73.18%,#5bb6da)"></div>
<div class="a" style="left:0;top:423px;width:720px;height:3px;background:linear-gradient(90deg,#919f83,#5c8df0 73.70%,#5cb6da)"></div>
<div class="a" style="left:0;top:426px;width:720px;height:3px;background:linear-gradient(90deg,#92a082,#5c8ef0 74.22%,#5cb6da)"></div>
<div class="a" style="left:0;top:429px;width:720px;height:3px;background:linear-gradient(90deg,#93a181,#5d8ff0 74.74%,#5db6db)"></div>
<div class="a" style="left:0;top:432px;width:720px;height:3px;background:linear-gradient(90deg,#93a180,#5d8fef 75.26%,#5db6db)"></div>
<div class="a" style="left:0;top:435px;width:720px;height:3px;background:linear-gradient(90deg,#94a27f,#5e90ef 75.78%,#5eb6dc)"></div>
<div class="a" style="left:0;top:438px;width:720px;height:3px;background:linear-gradient(90deg,#95a37e,#5e91ef 76.30%,#5eb6dc)"></div>
<div class="a" style="left:0;top:441px;width:720px;height:3px;background:linear-gradient(90deg,#96a47e,#5f91ef 76.82%,#5fb6dc)"></div>
<div class="a" style="left:0;top:444px;width:720px;height:3px;background:linear-gradient(90deg,#97a57d,#5f92ef 77.34%,#5fb5dd)"></div>
<div class="a" style="left:0;top:447px;width:720px;height:3px;background:linear-gradient(90deg,#97a57c,#5f93ef 77.86%,#5fb5dd)"></div>
<div class="a" style="left:0;top:450px;width:720px;height:3px;background:linear-gradient(90deg,#98a67b,#6093ef 78.39%,#60b5dd)"></div>
<div class="a" style="left:0;top:453px;width:720px;height:3px;background:linear-gradient(90deg,#99a77a,#6094ef 78.91%,#60b5de)"></div>
<div class="a" style="left:0;top:456px;width:720px;height:3px;background:linear-gradient(90deg,#9aa879,#6195ef 79.43%,#61b5de)"></div>
<div class="a" style="left:0;top:459px;width:720px;height:3px;background:linear-gradient(90deg,#9ba978,#6196ef 79.95%,#61b5de)"></div>
<div class="a" style="left:0;top:462px;width:720px;height:3px;background:linear-gradient(90deg,#9caa78,#6296ef 80.47%,#62b5df)"></div>
<div class="a" style="left:0;top:465px;width:720px;height:3px;background:linear-gradient(90deg,#9caa77,#6297ef 80.99%,#62b5df)"></div>
<div class="a" style="left:0;top:468px;width:720px;height:3px;background:linear-gradient(90deg,#9dab76,#6298ef 81.51%,#62b4df)"></div>
<div class="a" style="left:0;top:471px;width:720px;height:3px;background:linear-gradient(90deg,#9eac75,#6398ef 82.03%,#63b4e0)"></div>
<div class="a" style="left:0;top:474px;width:720px;height:3px;background:linear-gradient(90deg,#9fad74,#6399ee 82.55%,#63b4e0)"></div>
<div class="a" style="left:0;top:477px;width:720px;height:3px;background:linear-gradient(90deg,#a0ae73,#649aee 83.07%,#64b4e0)"></div>
<div class="a" style="left:0;top:480px;width:720px;height:3px;background:linear-gradient(90deg,#a0ae73,#649aee 83.59%,#64b4e1)"></div>
<div class="a" style="left:0;top:483px;width:720px;height:3px;background:linear-gradient(90deg,#a1af72,#659bee 84.11%,#65b4e1)"></div>
<div class="a" style="left:0;top:486px;width:720px;height:3px;background:linear-gradient(90deg,#a2b071,#659cee 84.64%,#65b4e2)"></div>
<div class="a" style="left:0;top:489px;width:720px;height:3px;background:linear-gradient(90deg,#a3b170,#669cee 85.16%,#66b4e2)"></div>
<div class="a" style="left:0;top:492px;width:720px;height:3px;background:linear-gradient(90deg,#a4b26f,#669dee 85.68%,#66b3e2)"></div>
<div class="a" style="left:0;top:495px;width:720px;height:3px;background:linear-gradient(90deg,#a4b26e,#669eee 86.20%,#66b3e3)"></div>
<div class="a" style="left:0;top:498px;width:720px;height:3px;background:linear-gradient(90deg,#a5b36e,#679eee 86.72%,#67b3e3)"></div>
<div class="a" style="left:0;top:501px;width:720px;height:3px;background:linear-gradient(90deg,#a6b46d,#679fee 87.24%,#67b3e3)"></div>
<div class="a" style="left:0;top:504px;width:720px;height:3px;background:linear-gradient(90deg,#a7b56c,#68a0ee 87.76%,#68b3e4)"></div>
<div class="a" style="left:0;top:507px;width:720px;height:3px;background:linear-gradient(90deg,#a8b66b,#68a1ee 88.28%,#68b3e4)"></div>
<div class="a" style="left:0;top:510px;width:720px;height:3px;background:linear-gradient(90deg,#a9b76a,#69a1ee 88.80%,#69b3e4)"></div>
<div class="a" style="left:0;top:513px;width:720px;height:3px;background:linear-gradient(90deg,#a9b769,#69a2ed 89.32%,#69b3e5)"></div>
<div class="a" style="left:0;top:516px;width:720px;height:3px;background:linear-gradient(90deg,#aab868,#69a3ed 89.84%,#69b2e5)"></div>
<div class="a" style="left:0;top:519px;width:720px;height:3px;background:linear-gradient(90deg,#abb968,#6aa3ed 90.36%,#6ab2e5)"></div>
<div class="a" style="left:0;top:522px;width:720px;height:3px;background:linear-gradient(90deg,#acba67,#6aa4ed 90.89%,#6ab2e6)"></div>
<div class="a" style="left:0;top:525px;width:720px;height:3px;background:linear-gradient(90deg,#adbb66,#6ba5ed 91.41%,#6bb2e6)"></div>
<div class="a" style="left:0;top:528px;width:720px;height:3px;background:linear-gradient(90deg,#adbb65,#6ba5ed 91.93%,#6bb2e7)"></div>
<div class="a" style="left:0;top:531px;width:720px;height:3px;background:linear-gradient(90deg,#aebc64,#6ca6ed 92.45%,#6cb2e7)"></div>
<div class="a" style="left:0;top:534px;width:720px;height:3px;background:linear-gradient(90deg,#afbd63,#6ca7ed 92.97%,#6cb2e7)"></div>
<div class="a" style="left:0;top:537px;width:720px;height:3px;background:linear-gradient(90deg,#b0be63,#6da7ed 93.49%,#6db2e8)"></div>
<div class="a" style="left:0;top:540px;width:720px;height:3px;background:linear-gradient(90deg,#b1bf62,#6da8ed 94.01%,#6db1e8)"></div>
<div class="a" style="left:0;top:543px;width:720px;height:3px;background:linear-gradient(90deg,#b1bf61,#6da9ed 94.53%,#6db1e8)"></div>
<div class="a" style="left:0;top:546px;width:720px;height:3px;background:linear-gradient(90deg,#b2c060,#6ea9ed 95.05%,#6eb1e9)"></div>
<div class="a" style="left:0;top:549px;width:720px;height:3px;background:linear-gradient(90deg,#b3c15f,#6eaaed 95.57%,#6eb1e9)"></div>
<div class="a" style="left:0;top:552px;width:720px;height:3px;background:linear-gradient(90deg,#b4c25e,#6fabed 96.09%,#6fb1e9)"></div>
<div class="a" style="left:0;top:555px;width:720px;height:3px;background:linear-gradient(90deg,#b5c35d,#6facec 96.61%,#6fb1ea)"></div>
<div class="a" style="left:0;top:558px;width:720px;height:3px;background:linear-gradient(90deg,#b6c45d,#70acec 97.14%,#70b1ea)"></div>
<div class="a" style="left:0;top:561px;width:720px;height:3px;background:linear-gradient(90deg,#b6c45c,#70adec 97.66%,#70b1ea)"></div>
<div class="a" style="left:0;top:564px;width:720px;height:3px;background:linear-gradient(90deg,#b7c55b,#70aeec 98.18%,#70b0eb)"></div>
<div class="a" style="left:0;top:567px;width:720px;height:3px;background:linear-gradient(90deg,#b8c65a,#71aeec 98.70%,#71b0eb)"></div>
<div class="a" style="left:0;top:570px;width:720px;height:3px;background:linear-gradient(90deg,#b9c759,#71afec 99.22%,#71b0eb)"></div>
<div class="a" style="left:0;top:573px;width:720px;height:3px;background:linear-gradient(90deg,#bac858,#72b0ec 99.74%,#72b0ec)"></div>
</div>
<div class="t" style="left:180.5px;top:190.5px;color:#ff1010;font-size:50px;line-height:50px;text-shadow:1px 1px 0 #1a1a40">P</div>
<div class="t" style="left:214px;top:202.5px;color:#f01818;font-size:39.6px;line-height:39.6px;text-shadow:1px 1px 0 #1a1a40">roba szöveget</div>
<div class="t" style="left:180px;top:256.5px;color:#ffff20;font-size:39.5px;line-height:39.5px;text-shadow:1px 1px 0 #1a1a40">adunk be a</div>
<svg style="left:88px;top:120px" width="720" height="576" viewBox="88 120 720 576"><defs><clipPath id="ph"><polygon points="394.4,288.3 656.8,182.3 814.6,572.7 552.2,678.7"/></clipPath><clipPath id="bc"><polygon points="520,587.2 531.4,578.1 554,582.6 588.1,587.2 626.7,528 638,512.2 656.3,496.3 679,505.4 701.7,487.3 724.4,469 735.8,460 769.8,460 815,555 815,566.7 724.4,596.3 633.6,632.6 547.3,659.9 500,660"/></clipPath><linearGradient id="sky" x1="0" y1="0" x2="0" y2="1"><stop offset="0" stop-color="#d6d6d6"/><stop offset="1" stop-color="#cacaca"/></linearGradient></defs><g clip-path="url(#ph)"><rect x="380" y="170" width="440" height="520" fill="url(#sky)"/><polygon points="520,587.2 531.4,578.1 554,582.6 588.1,587.2 626.7,528 638,512.2 656.3,496.3 679,505.4 701.7,487.3 724.4,469 735.8,460 769.8,460 815,555 815,566.7 724.4,596.3 633.6,632.6 547.3,659.9 500,660" fill="#6e7272" /><g clip-path="url(#bc)"><circle cx="669" cy="537" r="1.3" fill="#4e5353"/><circle cx="699" cy="586" r="1.3" fill="#4e5353"/><circle cx="515" cy="648" r="1.7" fill="#5a5f5f"/><circle cx="670" cy="583" r="2.2" fill="#5a5f5f"/><circle cx="532" cy="584" r="1.5" fill="#525757"/><circle cx="714" cy="551" r="1.8" fill="#4e5353"/><circle cx="791" cy="536" r="1.6" fill="#5a5f5f"/><circle cx="720" cy="510" r="2.2" fill="#4e5353"/><circle cx="656" cy="532" r="2.0" fill="#4e5353"/><circle cx="632" cy="625" r="1.5" fill="#7e8282"/><circle cx="585" cy="612" r="1.3" fill="#8a8e8e"/><circle cx="759" cy="519" r="1.9" fill="#8a8e8e"/><circle cx="519" cy="628" r="1.4" fill="#5a5f5f"/><circle cx="673" cy="614" r="3.0" fill="#7e8282"/><circle cx="686" cy="514" r="1.2" fill="#7e8282"/><circle cx="668" cy="592" r="1.8" fill="#5a5f5f"/><circle cx="718" cy="571" r="2.3" fill="#525757"/><circle cx="676" cy="545" r="1.9" fill="#7e8282"/><circle cx="539" cy="646" r="3.0" fill="#7e8282"/><circle cx="651" cy="525" r="1.5" fill="#8a8e8e"/><circle cx="733" cy="563" r="2.4" fill="#4e5353"/><circle cx="553" cy="629" r="2.2" fill="#4e5353"/><circle cx="582" cy="611" r="2.9" fill="#7e8282"/><circle cx="648" cy="531" r="2.1" fill="#4e5353"/><circle cx="765" cy="563" r="2.4" fill="#525757"/><circle cx="763" cy="482" r="1.9" fill="#5a5f5f"/><circle cx="749" cy="530" r="2.6" fill="#7e8282"/><circle cx="646" cy="622" r="1.4" fill="#5a5f5f"/><circle cx="548" cy="659" r="2.7" fill="#5a5f5f"/><circle cx="693" cy="589" r="2.1" fill="#8a8e8e"/><circle cx="729" cy="478" r="2.5" fill="#5a5f5f"/><circle cx="760" cy="502" r="1.7" fill="#8a8e8e"/><circle cx="603" cy="577" r="2.7" fill="#525757"/><circle cx="787" cy="535" r="2.0" fill="#4e5353"/><circle cx="757" cy="571" r="2.7" fill="#4e5353"/><circle cx="744" cy="489" r="1.5" fill="#4e5353"/><circle cx="728" cy="580" r="1.8" fill="#4e5353"/><circle cx="667" cy="564" r="2.6" fill="#4e5353"/><circle cx="691" cy="500" r="1.7" fill="#4e5353"/><circle cx="668" cy="563" r="2.9" fill="#4e5353"/><circle cx="783" cy="490" r="2.5" fill="#8a8e8e"/><circle cx="545" cy="654" r="2.9" fill="#5a5f5f"/><circle cx="735" cy="476" r="2.8" fill="#5a5f5f"/><circle cx="662" cy="531" r="1.6" fill="#8a8e8e"/><circle cx="721" cy="541" r="2.1" fill="#8a8e8e"/><circle cx="745" cy="516" r="1.4" fill="#7e8282"/><circle cx="798" cy="546" r="2.2" fill="#4e5353"/><circle cx="680" cy="613" r="1.4" fill="#525757"/><circle cx="752" cy="496" r="2.8" fill="#8a8e8e"/><circle cx="753" cy="474" r="2.7" fill="#525757"/><circle cx="698" cy="574" r="1.6" fill="#7e8282"/><circle cx="731" cy="579" r="1.5" fill="#7e8282"/><circle cx="707" cy="601" r="2.4" fill="#4e5353"/><circle cx="763" cy="543" r="2.1" fill="#5a5f5f"/><circle cx="700" cy="546" r="1.8" fill="#525757"/><circle cx="710" cy="541" r="2.1" fill="#8a8e8e"/><circle cx="511" cy="654" r="1.6" fill="#5a5f5f"/><circle cx="650" cy="568" r="1.6" fill="#4e5353"/><circle cx="745" cy="475" r="2.7" fill="#5a5f5f"/><circle cx="573" cy="587" r="2.2" fill="#5a5f5f"/><circle cx="777" cy="543" r="1.8" fill="#7e8282"/><circle cx="547" cy="618" r="2.4" fill="#525757"/><circle cx="662" cy="552" r="2.5" fill="#4e5353"/><circle cx="533" cy="643" r="2.2" fill="#525757"/><circle cx="658" cy="575" r="2.4" fill="#525757"/><circle cx="735" cy="562" r="2.7" fill="#8a8e8e"/><circle cx="574" cy="625" r="1.6" fill="#7e8282"/><circle cx="656" cy="541" r="2.1" fill="#8a8e8e"/><circle cx="734" cy="523" r="2.2" fill="#525757"/><circle cx="652" cy="564" r="3.0" fill="#525757"/><circle cx="646" cy="560" r="1.4" fill="#4e5353"/><circle cx="805" cy="556" r="1.7" fill="#5a5f5f"/><circle cx="735" cy="514" r="1.8" fill="#4e5353"/><circle cx="758" cy="569" r="2.8" fill="#8a8e8e"/><circle cx="642" cy="523" r="1.5" fill="#8a8e8e"/><circle cx="709" cy="598" r="1.5" fill="#8a8e8e"/><circle cx="637" cy="526" r="2.6" fill="#7e8282"/><circle cx="731" cy="556" r="2.6" fill="#8a8e8e"/><circle cx="581" cy="621" r="2.4" fill="#7e8282"/><circle cx="707" cy="523" r="2.2" fill="#7e8282"/><circle cx="538" cy="600" r="1.3" fill="#4e5353"/><circle cx="785" cy="567" r="1.6" fill="#8a8e8e"/><circle cx="814" cy="556" r="1.5" fill="#5a5f5f"/><circle cx="675" cy="527" r="1.9" fill="#4e5353"/><circle cx="774" cy="541" r="2.5" fill="#5a5f5f"/><circle cx="659" cy="597" r="2.8" fill="#5a5f5f"/><circle cx="529" cy="657" r="1.9" fill="#7e8282"/><circle cx="636" cy="525" r="2.7" fill="#525757"/><circle cx="805" cy="565" r="1.3" fill="#4e5353"/><circle cx="741" cy="558" r="2.2" fill="#525757"/><circle cx="697" cy="574" r="2.0" fill="#525757"/><circle cx="582" cy="633" r="1.2" fill="#4e5353"/><circle cx="778" cy="562" r="1.6" fill="#5a5f5f"/><circle cx="561" cy="654" r="2.4" fill="#525757"/><circle cx="581" cy="605" r="2.9" fill="#5a5f5f"/><circle cx="655" cy="612" r="2.5" fill="#8a8e8e"/><circle cx="715" cy="500" r="2.6" fill="#4e5353"/><circle cx="563" cy="627" r="1.5" fill="#7e8282"/><circle cx="570" cy="626" r="1.7" fill="#4e5353"/><circle cx="656" cy="497" r="1.6" fill="#7e8282"/><circle cx="688" cy="548" r="2.5" fill="#5a5f5f"/><circle cx="649" cy="539" r="2.9" fill="#5a5f5f"/><circle cx="602" cy="621" r="2.1" fill="#7e8282"/><circle cx="578" cy="596" r="1.9" fill="#7e8282"/><circle cx="790" cy="513" r="2.5" fill="#4e5353"/><circle cx="583" cy="616" r="1.8" fill="#8a8e8e"/><circle cx="594" cy="617" r="2.3" fill="#525757"/><circle cx="800" cy="542" r="1.7" fill="#7e8282"/><circle cx="757" cy="485" r="2.1" fill="#525757"/><circle cx="691" cy="529" r="1.8" fill="#8a8e8e"/><circle cx="661" cy="543" r="1.5" fill="#7e8282"/><circle cx="674" cy="528" r="3.0" fill="#525757"/><circle cx="657" cy="615" r="2.0" fill="#5a5f5f"/><circle cx="781" cy="508" r="2.2" fill="#525757"/><circle cx="746" cy="521" r="1.7" fill="#8a8e8e"/><circle cx="617" cy="621" r="1.6" fill="#5a5f5f"/><circle cx="666" cy="601" r="1.4" fill="#7e8282"/><circle cx="793" cy="539" r="2.8" fill="#7e8282"/><circle cx="629" cy="539" r="2.3" fill="#525757"/><circle cx="564" cy="634" r="2.2" fill="#525757"/><circle cx="629" cy="634" r="2.4" fill="#5a5f5f"/><circle cx="552" cy="611" r="1.9" fill="#8a8e8e"/><circle cx="710" cy="549" r="1.3" fill="#4e5353"/><circle cx="778" cy="548" r="1.2" fill="#8a8e8e"/><circle cx="703" cy="543" r="1.9" fill="#525757"/><circle cx="682" cy="537" r="2.6" fill="#5a5f5f"/><circle cx="528" cy="595" r="1.9" fill="#4e5353"/><circle cx="753" cy="523" r="2.7" fill="#525757"/><circle cx="807" cy="564" r="1.3" fill="#7e8282"/><circle cx="527" cy="615" r="2.4" fill="#5a5f5f"/><circle cx="696" cy="593" r="1.6" fill="#7e8282"/><circle cx="626" cy="572" r="1.9" fill="#525757"/><circle cx="757" cy="498" r="2.8" fill="#525757"/><circle cx="710" cy="528" r="1.9" fill="#7e8282"/><circle cx="673" cy="596" r="1.8" fill="#7e8282"/><circle cx="623" cy="538" r="2.1" fill="#5a5f5f"/><circle cx="654" cy="508" r="2.6" fill="#7e8282"/><circle cx="753" cy="568" r="2.4" fill="#525757"/><circle cx="659" cy="540" r="2.9" fill="#5a5f5f"/><circle cx="779" cy="520" r="2.7" fill="#5a5f5f"/><circle cx="570" cy="642" r="2.3" fill="#8a8e8e"/><circle cx="550" cy="657" r="1.7" fill="#7e8282"/><circle cx="782" cy="493" r="2.6" fill="#525757"/><circle cx="742" cy="466" r="2.7" fill="#7e8282"/><circle cx="675" cy="586" r="2.8" fill="#525757"/><circle cx="572" cy="593" r="2.9" fill="#8a8e8e"/><circle cx="758" cy="512" r="2.4" fill="#4e5353"/><circle cx="697" cy="549" r="1.9" fill="#525757"/><circle cx="571" cy="586" r="2.3" fill="#5a5f5f"/><circle cx="546" cy="605" r="1.7" fill="#8a8e8e"/><circle cx="687" cy="585" r="2.3" fill="#4e5353"/><circle cx="731" cy="511" r="2.8" fill="#525757"/><circle cx="693" cy="603" r="1.6" fill="#7e8282"/><circle cx="563" cy="592" r="2.1" fill="#7e8282"/><circle cx="756" cy="494" r="1.8" fill="#8a8e8e"/><circle cx="728" cy="563" r="2.2" fill="#7e8282"/><circle cx="647" cy="622" r="2.0" fill="#5a5f5f"/><circle cx="622" cy="590" r="1.9" fill="#4e5353"/><circle cx="638" cy="618" r="2.2" fill="#8a8e8e"/><circle cx="749" cy="543" r="2.3" fill="#4e5353"/><circle cx="793" cy="533" r="1.5" fill="#525757"/><circle cx="668" cy="604" r="2.8" fill="#7e8282"/><circle cx="699" cy="520" r="1.4" fill="#525757"/><circle cx="650" cy="520" r="2.5" fill="#7e8282"/><circle cx="681" cy="520" r="2.0" fill="#4e5353"/><circle cx="564" cy="626" r="3.0" fill="#525757"/><circle cx="802" cy="571" r="2.2" fill="#5a5f5f"/><circle cx="720" cy="567" r="1.4" fill="#525757"/><circle cx="735" cy="550" r="2.4" fill="#8a8e8e"/><circle cx="784" cy="568" r="1.9" fill="#5a5f5f"/><circle cx="687" cy="610" r="2.3" fill="#525757"/><circle cx="549" cy="645" r="2.4" fill="#8a8e8e"/><circle cx="744" cy="585" r="1.4" fill="#7e8282"/><circle cx="660" cy="515" r="2.6" fill="#4e5353"/><circle cx="731" cy="553" r="1.6" fill="#525757"/><circle cx="769" cy="553" r="1.6" fill="#8a8e8e"/><circle cx="690" cy="546" r="2.5" fill="#7e8282"/><circle cx="721" cy="587" r="2.4" fill="#5a5f5f"/><circle cx="710" cy="602" r="2.8" fill="#4e5353"/><circle cx="702" cy="557" r="1.8" fill="#525757"/><circle cx="782" cy="510" r="1.9" fill="#5a5f5f"/><circle cx="643" cy="595" r="1.9" fill="#5a5f5f"/><circle cx="782" cy="529" r="1.2" fill="#7e8282"/><circle cx="767" cy="558" r="1.6" fill="#7e8282"/><circle cx="661" cy="599" r="2.7" fill="#4e5353"/><circle cx="608" cy="622" r="2.0" fill="#5a5f5f"/><circle cx="624" cy="627" r="1.4" fill="#4e5353"/><circle cx="632" cy="612" r="1.8" fill="#8a8e8e"/><circle cx="803" cy="559" r="1.5" fill="#525757"/><circle cx="648" cy="581" r="1.6" fill="#5a5f5f"/><circle cx="611" cy="599" r="2.7" fill="#7e8282"/><circle cx="647" cy="521" r="2.2" fill="#5a5f5f"/><circle cx="746" cy="561" r="2.6" fill="#5a5f5f"/><circle cx="727" cy="518" r="1.6" fill="#8a8e8e"/><circle cx="783" cy="489" r="1.7" fill="#7e8282"/><circle cx="518" cy="641" r="2.8" fill="#5a5f5f"/><circle cx="667" cy="533" r="2.2" fill="#525757"/><circle cx="592" cy="592" r="2.2" fill="#5a5f5f"/><circle cx="747" cy="502" r="1.9" fill="#4e5353"/><circle cx="553" cy="656" r="2.3" fill="#525757"/><circle cx="562" cy="611" r="2.2" fill="#7e8282"/><circle cx="711" cy="481" r="1.4" fill="#7e8282"/><circle cx="655" cy="567" r="2.2" fill="#525757"/><circle cx="719" cy="567" r="1.7" fill="#7e8282"/><circle cx="618" cy="549" r="2.9" fill="#525757"/><circle cx="514" cy="621" r="3.0" fill="#525757"/><circle cx="661" cy="564" r="2.8" fill="#525757"/><circle cx="708" cy="532" r="2.6" fill="#4e5353"/><circle cx="743" cy="502" r="2.0" fill="#7e8282"/><circle cx="656" cy="530" r="3.0" fill="#4e5353"/><circle cx="561" cy="615" r="1.4" fill="#525757"/><circle cx="747" cy="464" r="2.5" fill="#7e8282"/><circle cx="692" cy="603" r="2.6" fill="#4e5353"/><circle cx="693" cy="594" r="2.3" fill="#4e5353"/><circle cx="776" cy="474" r="1.3" fill="#7e8282"/><circle cx="697" cy="494" r="2.4" fill="#525757"/><circle cx="775" cy="486" r="1.8" fill="#8a8e8e"/><circle cx="772" cy="497" r="1.3" fill="#525757"/><circle cx="636" cy="599" r="2.9" fill="#525757"/><circle cx="657" cy="572" r="2.7" fill="#7e8282"/><circle cx="622" cy="588" r="2.9" fill="#5a5f5f"/><circle cx="650" cy="548" r="1.4" fill="#7e8282"/><circle cx="715" cy="482" r="2.9" fill="#525757"/><circle cx="649" cy="517" r="2.2" fill="#7e8282"/><circle cx="731" cy="497" r="1.3" fill="#5a5f5f"/><circle cx="730" cy="474" r="2.3" fill="#7e8282"/><circle cx="757" cy="473" r="1.8" fill="#4e5353"/><circle cx="552" cy="649" r="2.1" fill="#525757"/><circle cx="729" cy="561" r="1.5" fill="#525757"/><circle cx="614" cy="600" r="2.3" fill="#7e8282"/><circle cx="643" cy="516" r="2.6" fill="#8a8e8e"/><circle cx="761" cy="530" r="2.3" fill="#525757"/><circle cx="780" cy="540" r="2.4" fill="#4e5353"/><circle cx="743" cy="508" r="2.0" fill="#525757"/><circle cx="751" cy="578" r="2.6" fill="#7e8282"/><circle cx="563" cy="624" r="2.9" fill="#5a5f5f"/><circle cx="625" cy="614" r="2.9" fill="#4e5353"/><circle cx="573" cy="585" r="2.8" fill="#4e5353"/><circle cx="601" cy="569" r="1.6" fill="#5a5f5f"/><circle cx="721" cy="537" r="2.2" fill="#7e8282"/><circle cx="617" cy="559" r="1.3" fill="#8a8e8e"/><circle cx="688" cy="533" r="2.1" fill="#525757"/><circle cx="685" cy="503" r="2.9" fill="#8a8e8e"/><circle cx="774" cy="558" r="2.9" fill="#525757"/><circle cx="790" cy="569" r="1.5" fill="#5a5f5f"/><circle cx="727" cy="494" r="2.9" fill="#8a8e8e"/><circle cx="563" cy="623" r="2.3" fill="#7e8282"/><circle cx="739" cy="479" r="1.8" fill="#8a8e8e"/><circle cx="623" cy="539" r="1.9" fill="#7e8282"/><circle cx="726" cy="499" r="1.3" fill="#5a5f5f"/><circle cx="525" cy="594" r="1.9" fill="#5a5f5f"/><circle cx="792" cy="542" r="1.2" fill="#525757"/><circle cx="642" cy="531" r="2.7" fill="#7e8282"/><circle cx="605" cy="621" r="1.5" fill="#7e8282"/><circle cx="774" cy="515" r="1.9" fill="#5a5f5f"/><circle cx="593" cy="636" r="1.7" fill="#525757"/><circle cx="518" cy="656" r="2.4" fill="#5a5f5f"/><circle cx="538" cy="625" r="2.9" fill="#7e8282"/><circle cx="518" cy="618" r="1.7" fill="#525757"/><circle cx="639" cy="569" r="2.1" fill="#7e8282"/><circle cx="528" cy="592" r="2.1" fill="#8a8e8e"/><circle cx="711" cy="596" r="1.5" fill="#8a8e8e"/><circle cx="731" cy="547" r="2.5" fill="#525757"/><circle cx="663" cy="533" r="1.7" fill="#7e8282"/><circle cx="740" cy="485" r="2.4" fill="#5a5f5f"/><circle cx="559" cy="642" r="1.9" fill="#5a5f5f"/><circle cx="721" cy="584" r="2.7" fill="#8a8e8e"/><circle cx="664" cy="555" r="2.1" fill="#525757"/><circle cx="730" cy="555" r="1.2" fill="#4e5353"/><circle cx="528" cy="594" r="1.5" fill="#8a8e8e"/><circle cx="579" cy="639" r="1.3" fill="#525757"/><circle cx="582" cy="643" r="2.3" fill="#7e8282"/><circle cx="665" cy="613" r="1.4" fill="#525757"/><circle cx="658" cy="518" r="1.4" fill="#7e8282"/><circle cx="779" cy="577" r="1.6" fill="#5a5f5f"/><circle cx="546" cy="584" r="2.5" fill="#5a5f5f"/><circle cx="688" cy="591" r="1.3" fill="#525757"/><circle cx="745" cy="531" r="1.6" fill="#8a8e8e"/><circle cx="677" cy="528" r="1.5" fill="#8a8e8e"/><circle cx="699" cy="537" r="2.2" fill="#525757"/><circle cx="711" cy="506" r="2.0" fill="#7e8282"/><circle cx="584" cy="608" r="1.7" fill="#4e5353"/><circle cx="754" cy="463" r="1.4" fill="#525757"/><circle cx="664" cy="553" r="2.9" fill="#8a8e8e"/><circle cx="639" cy="570" r="2.8" fill="#7e8282"/><circle cx="682" cy="517" r="2.5" fill="#4e5353"/><circle cx="719" cy="505" r="1.9" fill="#4e5353"/><circle cx="724" cy="559" r="2.2" fill="#4e5353"/><circle cx="805" cy="544" r="2.9" fill="#5a5f5f"/><circle cx="771" cy="509" r="2.2" fill="#7e8282"/><circle cx="691" cy="533" r="2.4" fill="#4e5353"/><circle cx="622" cy="554" r="2.5" fill="#525757"/><circle cx="631" cy="605" r="1.5" fill="#5a5f5f"/><circle cx="759" cy="571" r="2.5" fill="#7e8282"/><circle cx="585" cy="597" r="2.3" fill="#5a5f5f"/><circle cx="629" cy="579" r="1.4" fill="#7e8282"/><circle cx="632" cy="631" r="2.8" fill="#4e5353"/><circle cx="535" cy="647" r="2.4" fill="#8a8e8e"/><circle cx="728" cy="521" r="1.9" fill="#4e5353"/><circle cx="688" cy="601" r="1.2" fill="#7e8282"/><circle cx="637" cy="540" r="1.6" fill="#8a8e8e"/><circle cx="744" cy="576" r="3.0" fill="#4e5353"/><circle cx="635" cy="559" r="1.3" fill="#8a8e8e"/><circle cx="629" cy="568" r="2.4" fill="#4e5353"/><circle cx="633" cy="545" r="2.6" fill="#4e5353"/><circle cx="608" cy="574" r="2.7" fill="#5a5f5f"/><circle cx="555" cy="603" r="1.7" fill="#8a8e8e"/><circle cx="780" cy="550" r="1.5" fill="#8a8e8e"/><circle cx="757" cy="502" r="2.8" fill="#7e8282"/><circle cx="557" cy="597" r="2.3" fill="#8a8e8e"/><circle cx="680" cy="597" r="2.5" fill="#7e8282"/><circle cx="724" cy="579" r="2.9" fill="#7e8282"/><circle cx="710" cy="499" r="2.1" fill="#4e5353"/><circle cx="782" cy="571" r="1.5" fill="#5a5f5f"/><circle cx="549" cy="626" r="1.4" fill="#525757"/><circle cx="654" cy="560" r="2.0" fill="#525757"/><circle cx="741" cy="465" r="1.3" fill="#5a5f5f"/><circle cx="757" cy="523" r="2.3" fill="#7e8282"/><circle cx="684" cy="548" r="1.9" fill="#7e8282"/><circle cx="507" cy="650" r="1.4" fill="#5a5f5f"/><circle cx="668" cy="542" r="1.9" fill="#525757"/><circle cx="803" cy="550" r="2.8" fill="#4e5353"/><circle cx="722" cy="476" r="1.7" fill="#5a5f5f"/><circle cx="675" cy="560" r="2.6" fill="#5a5f5f"/><circle cx="728" cy="540" r="2.9" fill="#5a5f5f"/><circle cx="564" cy="648" r="2.4" fill="#8a8e8e"/><circle cx="688" cy="554" r="3.0" fill="#4e5353"/><circle cx="578" cy="592" r="1.6" fill="#525757"/><circle cx="741" cy="461" r="2.5" fill="#5a5f5f"/><circle cx="768" cy="527" r="2.4" fill="#525757"/><circle cx="561" cy="617" r="1.4" fill="#8a8e8e"/><circle cx="540" cy="616" r="1.7" fill="#7e8282"/><circle cx="766" cy="560" r="2.3" fill="#5a5f5f"/><circle cx="615" cy="635" r="2.4" fill="#7e8282"/><circle cx="585" cy="592" r="1.6" fill="#525757"/><circle cx="627" cy="592" r="2.0" fill="#8a8e8e"/><circle cx="549" cy="621" r="2.2" fill="#5a5f5f"/><circle cx="678" cy="506" r="2.1" fill="#4e5353"/><circle cx="716" cy="534" r="1.2" fill="#8a8e8e"/><circle cx="684" cy="612" r="3.0" fill="#525757"/><circle cx="745" cy="533" r="2.8" fill="#7e8282"/><circle cx="719" cy="544" r="2.5" fill="#5a5f5f"/><circle cx="798" cy="550" r="2.9" fill="#4e5353"/><circle cx="698" cy="557" r="1.3" fill="#5a5f5f"/><circle cx="635" cy="570" r="2.9" fill="#5a5f5f"/><circle cx="552" cy="631" r="1.6" fill="#8a8e8e"/><circle cx="543" cy="614" r="2.4" fill="#5a5f5f"/><circle cx="718" cy="485" r="2.4" fill="#8a8e8e"/><circle cx="542" cy="614" r="2.3" fill="#5a5f5f"/><circle cx="605" cy="638" r="2.2" fill="#5a5f5f"/><circle cx="713" cy="490" r="3.0" fill="#7e8282"/><circle cx="762" cy="481" r="1.7" fill="#8a8e8e"/><circle cx="782" cy="523" r="1.4" fill="#8a8e8e"/><circle cx="526" cy="616" r="3.0" fill="#4e5353"/><circle cx="583" cy="600" r="2.9" fill="#7e8282"/><circle cx="703" cy="596" r="2.9" fill="#8a8e8e"/><circle cx="735" cy="461" r="1.9" fill="#5a5f5f"/><circle cx="734" cy="529" r="1.5" fill="#8a8e8e"/><circle cx="674" cy="538" r="2.7" fill="#5a5f5f"/><circle cx="633" cy="619" r="3.0" fill="#4e5353"/><circle cx="717" cy="492" r="2.0" fill="#7e8282"/><circle cx="748" cy="551" r="1.7" fill="#525757"/><circle cx="662" cy="550" r="1.8" fill="#7e8282"/><circle cx="556" cy="618" r="1.9" fill="#525757"/><circle cx="640" cy="582" r="1.8" fill="#5a5f5f"/><circle cx="648" cy="577" r="2.1" fill="#7e8282"/><circle cx="756" cy="469" r="2.4" fill="#4e5353"/><circle cx="707" cy="582" r="2.0" fill="#8a8e8e"/><circle cx="651" cy="601" r="1.7" fill="#8a8e8e"/><circle cx="667" cy="598" r="2.7" fill="#5a5f5f"/><circle cx="714" cy="556" r="1.4" fill="#4e5353"/><circle cx="617" cy="586" r="1.9" fill="#4e5353"/><circle cx="736" cy="505" r="2.7" fill="#525757"/><circle cx="559" cy="606" r="2.5" fill="#5a5f5f"/><circle cx="675" cy="506" r="2.2" fill="#525757"/><circle cx="645" cy="609" r="2.2" fill="#5a5f5f"/><circle cx="543" cy="630" r="1.3" fill="#5a5f5f"/><circle cx="543" cy="659" r="1.4" fill="#5a5f5f"/><circle cx="774" cy="493" r="2.5" fill="#8a8e8e"/><circle cx="665" cy="535" r="2.1" fill="#4e5353"/><circle cx="603" cy="591" r="1.3" fill="#5a5f5f"/><circle cx="752" cy="497" r="2.2" fill="#8a8e8e"/><circle cx="740" cy="515" r="2.0" fill="#525757"/><circle cx="752" cy="463" r="1.5" fill="#4e5353"/><circle cx="624" cy="562" r="1.5" fill="#7e8282"/><circle cx="614" cy="560" r="2.2" fill="#7e8282"/><circle cx="795" cy="526" r="1.8" fill="#7e8282"/><circle cx="711" cy="516" r="1.7" fill="#4e5353"/><circle cx="681" cy="586" r="1.5" fill="#525757"/><circle cx="634" cy="584" r="1.4" fill="#8a8e8e"/><circle cx="750" cy="509" r="2.6" fill="#5a5f5f"/><circle cx="715" cy="523" r="2.6" fill="#8a8e8e"/><circle cx="660" cy="598" r="1.8" fill="#4e5353"/><circle cx="725" cy="530" r="2.5" fill="#8a8e8e"/><circle cx="628" cy="544" r="2.6" fill="#5a5f5f"/><circle cx="727" cy="512" r="2.2" fill="#8a8e8e"/><circle cx="781" cy="519" r="2.1" fill="#525757"/><circle cx="562" cy="620" r="2.9" fill="#4e5353"/><circle cx="757" cy="584" r="2.5" fill="#525757"/><circle cx="603" cy="624" r="2.4" fill="#7e8282"/><circle cx="555" cy="649" r="2.6" fill="#525757"/><circle cx="697" cy="530" r="2.1" fill="#4e5353"/><circle cx="600" cy="602" r="1.8" fill="#7e8282"/><circle cx="742" cy="475" r="2.7" fill="#7e8282"/><circle cx="608" cy="608" r="2.8" fill="#5a5f5f"/><circle cx="707" cy="590" r="1.8" fill="#4e5353"/><circle cx="581" cy="615" r="2.6" fill="#8a8e8e"/><circle cx="705" cy="579" r="2.5" fill="#4e5353"/><circle cx="572" cy="625" r="1.4" fill="#525757"/><circle cx="745" cy="513" r="2.3" fill="#5a5f5f"/><circle cx="666" cy="534" r="2.5" fill="#7e8282"/><circle cx="809" cy="567" r="2.3" fill="#8a8e8e"/><circle cx="784" cy="543" r="1.6" fill="#525757"/><circle cx="534" cy="620" r="1.3" fill="#7e8282"/><circle cx="712" cy="534" r="1.6" fill="#7e8282"/><circle cx="549" cy="649" r="2.8" fill="#8a8e8e"/><circle cx="732" cy="465" r="2.6" fill="#7e8282"/><circle cx="557" cy="649" r="3.0" fill="#8a8e8e"/><circle cx="658" cy="534" r="2.6" fill="#7e8282"/><circle cx="574" cy="633" r="2.4" fill="#525757"/><circle cx="542" cy="589" r="2.2" fill="#525757"/><circle cx="729" cy="466" r="2.8" fill="#525757"/><circle cx="777" cy="482" r="2.1" fill="#5a5f5f"/><circle cx="699" cy="578" r="3.0" fill="#4e5353"/><circle cx="611" cy="567" r="2.9" fill="#8a8e8e"/><circle cx="523" cy="613" r="1.2" fill="#8a8e8e"/><circle cx="660" cy="547" r="2.2" fill="#8a8e8e"/><circle cx="735" cy="515" r="2.0" fill="#4e5353"/><circle cx="622" cy="542" r="1.9" fill="#5a5f5f"/><circle cx="527" cy="595" r="1.3" fill="#525757"/><circle cx="628" cy="581" r="2.4" fill="#7e8282"/><circle cx="673" cy="526" r="2.9" fill="#525757"/><circle cx="649" cy="601" r="2.0" fill="#8a8e8e"/><circle cx="574" cy="597" r="2.5" fill="#7e8282"/><circle cx="523" cy="634" r="2.4" fill="#4e5353"/><circle cx="741" cy="514" r="2.7" fill="#8a8e8e"/><circle cx="664" cy="562" r="1.6" fill="#5a5f5f"/><circle cx="521" cy="625" r="1.9" fill="#5a5f5f"/><circle cx="759" cy="559" r="2.4" fill="#525757"/><circle cx="772" cy="551" r="1.9" fill="#8a8e8e"/><circle cx="709" cy="573" r="1.7" fill="#525757"/><circle cx="654" cy="604" r="2.3" fill="#4e5353"/><circle cx="556" cy="617" r="1.7" fill="#8a8e8e"/><circle cx="638" cy="573" r="2.1" fill="#525757"/><circle cx="639" cy="538" r="2.5" fill="#8a8e8e"/><circle cx="805" cy="552" r="2.3" fill="#8a8e8e"/><circle cx="724" cy="539" r="2.4" fill="#8a8e8e"/><circle cx="771" cy="473" r="2.0" fill="#7e8282"/><circle cx="666" cy="567" r="2.8" fill="#525757"/><circle cx="534" cy="582" r="2.9" fill="#7e8282"/><circle cx="631" cy="562" r="2.8" fill="#7e8282"/><circle cx="622" cy="558" r="1.4" fill="#525757"/><circle cx="760" cy="500" r="1.8" fill="#525757"/><circle cx="766" cy="487" r="1.9" fill="#525757"/><circle cx="775" cy="488" r="1.8" fill="#4e5353"/><circle cx="670" cy="572" r="1.4" fill="#7e8282"/><circle cx="580" cy="648" r="2.2" fill="#4e5353"/><circle cx="620" cy="553" r="2.2" fill="#8a8e8e"/><circle cx="669" cy="539" r="2.0" fill="#7e8282"/><circle cx="724" cy="487" r="2.9" fill="#8a8e8e"/><circle cx="599" cy="575" r="1.9" fill="#4e5353"/><circle cx="759" cy="463" r="1.6" fill="#7e8282"/><circle cx="592" cy="615" r="2.6" fill="#4e5353"/><circle cx="692" cy="546" r="2.5" fill="#5a5f5f"/><circle cx="637" cy="599" r="1.3" fill="#525757"/><circle cx="757" cy="567" r="1.2" fill="#4e5353"/><circle cx="732" cy="492" r="1.6" fill="#8a8e8e"/><circle cx="753" cy="575" r="1.5" fill="#5a5f5f"/><circle cx="663" cy="560" r="1.6" fill="#525757"/><circle cx="800" cy="548" r="2.4" fill="#8a8e8e"/><circle cx="722" cy="555" r="2.0" fill="#525757"/><circle cx="727" cy="525" r="1.7" fill="#4e5353"/><circle cx="765" cy="489" r="2.6" fill="#5a5f5f"/><circle cx="620" cy="599" r="1.6" fill="#4e5353"/><circle cx="719" cy="500" r="1.5" fill="#5a5f5f"/><circle cx="635" cy="608" r="1.4" fill="#8a8e8e"/><circle cx="666" cy="520" r="1.8" fill="#7e8282"/><circle cx="595" cy="586" r="2.6" fill="#5a5f5f"/><circle cx="642" cy="511" r="2.5" fill="#5a5f5f"/><circle cx="535" cy="642" r="2.7" fill="#4e5353"/><circle cx="643" cy="623" r="1.4" fill="#5a5f5f"/><circle cx="688" cy="559" r="1.3" fill="#4e5353"/><circle cx="682" cy="548" r="2.5" fill="#7e8282"/><circle cx="682" cy="534" r="1.9" fill="#5a5f5f"/><circle cx="613" cy="604" r="1.4" fill="#525757"/><circle cx="530" cy="653" r="1.4" fill="#7e8282"/><circle cx="729" cy="575" r="1.6" fill="#525757"/><circle cx="680" cy="610" r="1.6" fill="#5a5f5f"/><circle cx="663" cy="521" r="2.8" fill="#525757"/><circle cx="709" cy="504" r="1.6" fill="#4e5353"/><circle cx="577" cy="590" r="3.0" fill="#525757"/><circle cx="568" cy="629" r="1.5" fill="#8a8e8e"/><circle cx="608" cy="637" r="2.0" fill="#5a5f5f"/><circle cx="630" cy="547" r="1.4" fill="#5a5f5f"/><circle cx="553" cy="634" r="2.6" fill="#5a5f5f"/><circle cx="651" cy="567" r="2.6" fill="#525757"/><circle cx="563" cy="596" r="2.7" fill="#7e8282"/><circle cx="529" cy="616" r="1.8" fill="#5a5f5f"/><circle cx="753" cy="566" r="2.6" fill="#7e8282"/><circle cx="543" cy="641" r="2.9" fill="#525757"/><circle cx="748" cy="512" r="2.7" fill="#5a5f5f"/><circle cx="576" cy="587" r="2.2" fill="#7e8282"/><circle cx="709" cy="544" r="2.3" fill="#8a8e8e"/><circle cx="760" cy="546" r="1.4" fill="#8a8e8e"/><circle cx="634" cy="524" r="1.7" fill="#4e5353"/><circle cx="756" cy="549" r="2.3" fill="#7e8282"/><circle cx="559" cy="655" r="1.9" fill="#4e5353"/><circle cx="754" cy="482" r="2.4" fill="#525757"/><circle cx="611" cy="639" r="2.8" fill="#7e8282"/><circle cx="805" cy="543" r="1.2" fill="#5a5f5f"/><circle cx="678" cy="603" r="2.5" fill="#525757"/><circle cx="543" cy="624" r="1.7" fill="#7e8282"/><circle cx="524" cy="595" r="2.0" fill="#8a8e8e"/><circle cx="614" cy="604" r="2.3" fill="#7e8282"/><circle cx="519" cy="602" r="2.1" fill="#525757"/><circle cx="518" cy="643" r="2.4" fill="#4e5353"/><circle cx="691" cy="558" r="2.9" fill="#7e8282"/><circle cx="781" cy="488" r="2.3" fill="#4e5353"/><circle cx="555" cy="588" r="3.0" fill="#5a5f5f"/><circle cx="713" cy="541" r="2.9" fill="#8a8e8e"/><circle cx="718" cy="517" r="1.5" fill="#4e5353"/><circle cx="563" cy="637" r="1.3" fill="#8a8e8e"/><circle cx="733" cy="493" r="1.8" fill="#525757"/><circle cx="745" cy="536" r="2.4" fill="#8a8e8e"/><circle cx="786" cy="556" r="2.7" fill="#5a5f5f"/><circle cx="745" cy="526" r="1.5" fill="#4e5353"/><circle cx="648" cy="581" r="2.4" fill="#525757"/><circle cx="789" cy="574" r="1.7" fill="#525757"/><circle cx="582" cy="629" r="1.3" fill="#4e5353"/><circle cx="596" cy="590" r="1.8" fill="#5a5f5f"/><circle cx="530" cy="591" r="2.7" fill="#525757"/><circle cx="556" cy="618" r="2.5" fill="#525757"/><circle cx="744" cy="544" r="2.9" fill="#8a8e8e"/><circle cx="626" cy="567" r="1.8" fill="#5a5f5f"/><circle cx="724" cy="487" r="2.5" fill="#7e8282"/><circle cx="710" cy="585" r="1.9" fill="#4e5353"/><circle cx="768" cy="509" r="1.4" fill="#8a8e8e"/><circle cx="777" cy="485" r="2.5" fill="#7e8282"/><circle cx="693" cy="517" r="1.3" fill="#4e5353"/><circle cx="691" cy="570" r="2.3" fill="#5a5f5f"/><circle cx="644" cy="627" r="2.0" fill="#4e5353"/><circle cx="512" cy="641" r="1.4" fill="#5a5f5f"/><circle cx="758" cy="518" r="3.0" fill="#4e5353"/><circle cx="745" cy="461" r="2.1" fill="#7e8282"/><circle cx="801" cy="547" r="2.4" fill="#525757"/><circle cx="643" cy="532" r="1.5" fill="#7e8282"/><circle cx="552" cy="626" r="1.3" fill="#4e5353"/><circle cx="744" cy="500" r="2.6" fill="#8a8e8e"/><circle cx="727" cy="469" r="1.6" fill="#525757"/><circle cx="735" cy="576" r="2.2" fill="#5a5f5f"/><circle cx="678" cy="526" r="1.8" fill="#525757"/><circle cx="753" cy="557" r="1.4" fill="#525757"/><circle cx="770" cy="537" r="2.8" fill="#7e8282"/><circle cx="750" cy="562" r="2.7" fill="#5a5f5f"/><circle cx="768" cy="574" r="1.7" fill="#7e8282"/><circle cx="507" cy="659" r="2.5" fill="#4e5353"/><circle cx="638" cy="620" r="1.9" fill="#7e8282"/><circle cx="567" cy="587" r="1.9" fill="#525757"/><circle cx="527" cy="631" r="1.6" fill="#4e5353"/></g><polygon points="540,662 547.3,659.9 633.6,632.6 724.4,596.3 815,564 815,580 549.5,677 540,680" fill="#a2a6a6" /><polygon points="448.7,404.1 461.7,388.9 472.6,382.4 470.4,373.7 483.4,365 500.8,356.4 511.7,347.7 513.8,334.6 505.1,321.6 496.5,302.1 494.3,282.5 500.8,263 513.8,250 533.4,236.9 557.3,228.2 581.2,226.1 605,232.6 620.2,243.4 613.7,250 600.7,258.6 592,269.5 570.3,271.7 544.2,282.5 535.5,295.5 535.5,312.9 526.9,321.6 522.5,334.6 522.5,352 511.7,365 496.5,373.7 474.7,388.9 453,408.5" fill="#828686" /><polygon points="535.5,295.5 544.2,282.5 570.3,271.7 592,269.5 585,262 560,262 538,272 526,288 524,310 515,330 512,345 522.5,352 522.5,334.6 526.9,321.6 535.5,312.9" fill="#6e7272" /><polygon points="535.5,295.5 542,282.5 561.6,272.7 583.3,271.7 594.2,278.2 600.7,286.9 598.5,293.4 605,313 596.3,319.4 587.7,323.8 592,328 570.3,330.3 544.2,328.1 542,321.6 535.5,313" fill="#727777" /><polygon points="544.2,328.1 570.3,330.3 592,328.1 613.7,328.1 627.5,323.75 636.9,318.1 646.3,308.75 665,306 683.8,310.6 702.5,325.6 717.5,346.25 728.8,376.25 732.5,402.5 728.8,425 717.5,440 702.5,445.6 695,443.75 706.25,455 708.5,469 719.9,487.3 729,516.8 735.8,546.3 744.8,566.7 769.8,573.6 792.5,575.8 781.2,582.6 747.1,587.2 724.4,594 719.9,573.6 715.3,550.8 701.7,528.1 694.9,505.4 679,494 656.3,482.7 626.7,482.7 624.5,516.8 620,546.3 631.3,578 638,605.4 656.3,610 667.6,619 647.2,628 629,632.6 624.5,610 606.3,580.4 592.7,550.8 590.4,523.6 579,494 567.7,466.8 565.3,454.6 563.5,433.3 561.7,419 551,410 536.8,403 533.3,419 529.7,447.5 520.9,465.3 528,493.7 515.5,495.5 490.7,500.8 490.7,490 496,474 501.3,442.2 504.9,406.6 506.6,380 505.1,373.7 513.8,356.4 531.2,347.7" fill="#545959" /><polygon points="652,318 668,314 686,318 700,332 712,352 720,378 723,402 719,422 708,434 694,436 680,420 668,395 655,360 648,335" fill="#414646" /><polygon points="550,333 575,334 600,332 625,330 645,332 650,350 645,380 636,410 625,432 600,440 578,447 566,450 563,425 556,408 544,398 538,372 540,345" fill="#5f6464" /><polygon points="566,452 600,442 630,434 650,440 660,460 640,470 620,476 590,482 573,478" fill="#5c6161" /><polygon points="491,494 526.2,472.4 625.6,429.7 632.75,431.5 629.2,436.8 529.7,483 497,502" fill="#8c9090" /></g></svg>
<div class="a" style="left:116px;top:138px;width:664px;height:541px;background:transparent;border:2px solid rgba(255,0,0,0.32)"></div>
<svg style="left:0;top:0" width="1331" height="1013"><g clip-path="none"></g></svg>
<svg style="left:0;top:0" width="1331" height="1013"><rect x="463.5" y="221.5" width="283" height="421" fill="none" stroke="rgba(140,130,130,0.75)" stroke-width="1" stroke-dasharray="4.5 5.2"/><g fill="#ffff10" stroke="rgba(30,50,0,0.55)" stroke-width="1"><rect x="459.5" y="217.5" width="7" height="7"/><rect x="742.5" y="217.5" width="7" height="7"/><rect x="459.5" y="638.5" width="7" height="7"/><rect x="742.5" y="638.5" width="7" height="7"/></g></svg>
<div class="a" style="left:856px;top:51px;width:474px;height:937px;background:#555;"></div>
<div class="a" style="left:856px;top:51px;width:2px;height:937px;background:#626262;"></div>
<div class="a" style="left:861px;top:53px;width:211px;height:21px;background:#424242;"></div>
<div class="a" style="left:861px;top:74px;width:143px;height:16px;background:#424242;"></div>
<div class="t" style="left:836.5px;top:55.8px;width:120px;text-align:center;color:#a8a8a8;font-size:11px;font-weight:bold">Kép</div>
<div class="t" style="left:906.7px;top:55.8px;width:120px;text-align:center;color:#a8a8a8;font-size:11px;font-weight:bold">Be</div>
<div class="t" style="left:977.0px;top:55.8px;width:120px;text-align:center;color:#a8a8a8;font-size:11px;font-weight:bold">Ki</div>
<div class="t" style="left:835.0px;top:76.5px;width:120px;text-align:center;color:#a8a8a8;font-size:11px;font-weight:bold">Mozgás</div>
<div class="t" style="left:907.5px;top:76.5px;width:120px;text-align:center;color:#a8a8a8;font-size:11px;font-weight:bold">Internet</div>
<div class="t" style="left:977.8px;top:76.5px;width:120px;text-align:center;color:#f4f4f4;font-size:11px;font-weight:bold">Effekt</div>
<div class="ph" style="left:869.5px;top:102.5px;width:200px">FORGATÁS</div>
<div class="pl" style="left:871px;top:121.5px;color:#bcbcbc">Forgatási szög</div>
<div class="pl" style="left:970px;top:121.5px;color:#bcbcbc">338</div>
<div class="pl" style="left:871px;top:140.5px;color:#bcbcbc">Sebesség</div>
<div class="pl" style="left:970px;top:140.5px;color:#bcbcbc">1</div>
<div class="pl" style="left:871px;top:159.5px;color:#bcbcbc">Típusa</div>
<div class="pl" style="left:970px;top:159.5px;color:#bcbcbc">Fix, manuális</div>
<div class="ph" style="left:869.5px;top:178.5px;width:200px">ÁTLÁTSZÓSÁG</div>
<div class="pl" style="left:871px;top:197.5px;color:#bcbcbc">Átlátszóság %-ba</div>
<div class="pl" style="left:970px;top:197.5px;color:#bcbcbc">100</div>
<div class="pl" style="left:871px;top:216.5px;color:#bcbcbc">Sebesség</div>
<div class="pl" style="left:970px;top:216.5px;color:#bcbcbc">1</div>
<div class="pl" style="left:871px;top:235.5px;color:#bcbcbc">Típusa</div>
<div class="pl" style="left:970px;top:235.5px;color:#bcbcbc">Fix</div>
<div class="ph" style="left:869.5px;top:254.5px;width:200px">ZOOM</div>
<div class="pl" style="left:871px;top:273.5px;color:#bcbcbc">Zoom</div>
<div class="pl" style="left:990px;top:273.5px;color:#bcbcbc">Nincs</div>
<div class="pl" style="left:871px;top:292.5px;color:#bcbcbc">Nagyitás</div>
<div class="pl" style="left:990px;top:292.5px;color:#bcbcbc">10</div>
<div class="pl" style="left:871px;top:311.5px;color:#bcbcbc">Effekt hossza [sec]</div>
<div class="pl" style="left:990px;top:311.5px;color:#bcbcbc">2</div>
<div class="pl" style="left:871px;top:330.5px;color:#bcbcbc">Start ideje: [sec]</div>
<div class="pl" style="left:990px;top:330.5px;color:#bcbcbc">5</div>
<div class="pl" style="left:871px;top:349.5px;color:#bcbcbc">Ismétlésszám [db]</div>
<div class="pl" style="left:990px;top:349.5px;color:#bcbcbc">2</div>
<div class="pl" style="left:871px;top:368.5px;color:#bcbcbc">Ismétlés ideje [sec]</div>
<div class="pl" style="left:990px;top:368.5px;color:#bcbcbc">4</div>
<div class="ph" style="left:869.5px;top:387.5px;width:200px">OBJEKTUM ALFA</div>
<div class="pl" style="left:871px;top:406.5px;color:#bcbcbc">Alfa Típus</div>
<div class="pl" style="left:990px;top:406.5px;color:#bcbcbc">Nincs</div>
<div class="pl" style="left:871px;top:425.5px;color:#bcbcbc">Kezdő % érték (0)</div>
<div class="pl" style="left:990px;top:425.5px;color:#bcbcbc">0</div>
<div class="pl" style="left:871px;top:444.5px;color:#bcbcbc">Vég % érték (100)</div>
<div class="pl" style="left:990px;top:444.5px;color:#bcbcbc">100</div>
<div class="ph" style="left:869.5px;top:463.5px;width:200px">STRETCH</div>
<div class="pl" style="left:871px;top:482.5px;color:#bcbcbc">Szerkesztés be</div>
<div class="pl" style="left:871px;top:501.5px;color:#bcbcbc">Be</div>
<div class="pl" style="left:871px;top:520.5px;color:#bcbcbc">Nézet</div>
<div class="pl" style="left:970px;top:520.5px;color:#bcbcbc">Eredeti</div>
<div class="pl" style="left:871px;top:539.5px;color:#bcbcbc">Ideje [1/10 sec ]</div>
<div class="pl" style="left:970px;top:539.5px;color:#bcbcbc">130</div>
<div class="a" style="left:967px;top:483px;width:19px;height:14px;background:transparent;border:1px solid #b0b0b0"></div>
<div class="a" style="left:967px;top:502px;width:19px;height:14px;background:transparent;border:1px solid #b0b0b0"></div>
<div class="a" style="left:871px;top:577px;width:37px;height:24px;background:linear-gradient(#1a5cc0,#0a4aa8 60%,#0a3f90);border-radius:12px;box-shadow:0 0 1px #223"></div>

<svg style="left:884px;top:583px" width="12" height="13" viewBox="0 0 12 13"><path d="M1 1V12L10.5 6.5Z" fill="#dfe8f8"/></svg>
<div class="a" style="left:927px;top:577px;width:37px;height:24px;background:linear-gradient(#1a5cc0,#0a4aa8 60%,#0a3f90);border-radius:12px;box-shadow:0 0 1px #223"></div>

<div class="a" style="left:939px;top:583px;width:12px;height:12px;background:#f4f4f4;"></div>
<div class="a" style="left:858px;top:607px;width:214px;height:381px;background:transparent;border-top:1px solid #666;border-right:1px solid #666;border-left:1px solid #5e5e5e"></div>
<svg style="left:862px;top:612px" width="198" height="16" viewBox="0 0 198 16"><g fill="none" stroke="#f0f0f0" stroke-width="2"><path d="M2 5L7 10L12 5"/><path d="M22 10L27 5L32 10"/><path d="M41 2H53M42 11L47 6L52 11"/><path d="M62 4L67 9L72 4M61 13H73"/></g><text x="80" y="12" font-family="Liberation Sans" font-weight="bold" font-size="11" fill="#f0f0f0">1:1</text><g fill="none" stroke="#f0f0f0" stroke-width="1.3"><path d="M100 3L111 13M100 3V7M100 3H104M111 13H107M111 13V9"/><path d="M98 1H101M98 1V4M113 15H110M113 15V12"/><path d="M120 3L131 13M120 3V7M120 3H124M131 13H127M131 13V9"/><path d="M118 1H121M118 1V4M133 15H130M133 15V12"/><rect x="126" y="3" width="5" height="4" fill="#f0f0f0"/><path d="M140 3L151 13M140 3V7M140 3H144M151 13H147M151 13V9"/><path d="M138 1H142M138 1V5M154 15H150M154 15V11M154 1H151M154 1V4M138 15H141M138 15V12"/><path d="M160 8H173M163 5L160 8L163 11M170 5L173 8L170 11"/><path d="M179.5 1V15M193.5 1V15" stroke-dasharray="2 1.5"/><path d="M181 8H192M184 5L181 8L184 11M189 5L192 8L189 11"/></g></svg>
<div class="a" style="left:862px;top:637px;width:13px;height:13px;background:#fff;border:1px solid #333"></div>
<svg style="left:863px;top:638px" width="11" height="11" viewBox="0 0 11 11"><path d="M1.5 5.5L4.2 8.5L9.5 2" fill="none" stroke="#111" stroke-width="1.6"/></svg>
<div class="a" style="left:862px;top:654px;width:13px;height:13px;background:#fff;border:1px solid #333"></div>
<svg style="left:863px;top:655px" width="11" height="11" viewBox="0 0 11 11"><path d="M1.5 5.5L4.2 8.5L9.5 2" fill="none" stroke="#111" stroke-width="1.6"/></svg>
<div class="t" style="left:879px;top:636px;color:#e4e4e4;font-size:10.5px;">01</div>
<div class="t" style="left:904px;top:636px;color:#e4e4e4;font-size:10.5px;">PN M...</div>
<div class="t" style="left:954px;top:636px;color:#e4e4e4;font-size:10.5px;">..</div>
<div class="a" style="left:878px;top:652px;width:170px;height:17px;background:#efefef;"></div>
<div class="t" style="left:879px;top:653px;color:#111;font-size:10.5px;">02</div>
<div class="t" style="left:904px;top:653px;color:#111;font-size:10.5px;">Picture</div>
<div class="t" style="left:954px;top:653px;color:#111;font-size:10.5px;">yd1vg937.bmp</div>
<svg style="left:1077px;top:53px" width="14" height="15" viewBox="0 0 14 15"><g fill="none" stroke="#f4f4f4" stroke-width="1.4"><path d="M2 1.5L5 4.5L2 7.5M5.5 1.5L8.5 4.5L5.5 7.5M9 1.5L12 4.5L9 7.5"/></g><path d="M4 10H10M7 9V12M3.5 13H10.5" stroke="#f4f4f4" stroke-width="1.3"/></svg>
<div class="a" style="left:1075px;top:75px;width:252px;height:145px;background:transparent;border:1px solid #6c6c6c"></div>
<div class="a" style="left:1111px;top:76px;width:180px;height:143px;overflow:hidden">
<div class="a" style="left:0;top:0px;width:180px;height:2px;background:linear-gradient(90deg,#4961cf,#4861d0 0.70%,#28b0b4)"></div>
<div class="a" style="left:0;top:2px;width:180px;height:2px;background:linear-gradient(90deg,#4a63ce,#4962d0 2.10%,#29b0b4)"></div>
<div class="a" style="left:0;top:4px;width:180px;height:2px;background:linear-gradient(90deg,#4b64cc,#4963d0 3.50%,#2ab1b5)"></div>
<div class="a" style="left:0;top:6px;width:180px;height:2px;background:linear-gradient(90deg,#4d66cb,#4965d0 4.90%,#2bb1b5)"></div>
<div class="a" style="left:0;top:8px;width:180px;height:2px;background:linear-gradient(90deg,#4e68c9,#4a66cf 6.29%,#2cb1b5)"></div>
<div class="a" style="left:0;top:10px;width:180px;height:2px;background:linear-gradient(90deg,#5069c8,#4a68cf 7.69%,#2db2b6)"></div>
<div class="a" style="left:0;top:12px;width:180px;height:2px;background:linear-gradient(90deg,#516bc7,#4b69cf 9.09%,#2db2b6)"></div>
<div class="a" style="left:0;top:14px;width:180px;height:2px;background:linear-gradient(90deg,#526dc5,#4b6acf 10.49%,#2eb2b6)"></div>
<div class="a" style="left:0;top:16px;width:180px;height:2px;background:linear-gradient(90deg,#546ec4,#4b6ccf 11.89%,#2fb2b6)"></div>
<div class="a" style="left:0;top:18px;width:180px;height:2px;background:linear-gradient(90deg,#5570c2,#4c6dcf 13.29%,#30b3b7)"></div>
<div class="a" style="left:0;top:20px;width:180px;height:2px;background:linear-gradient(90deg,#5672c1,#4c6fcf 14.69%,#31b3b7)"></div>
<div class="a" style="left:0;top:22px;width:180px;height:2px;background:linear-gradient(90deg,#5873bf,#4d70cf 16.08%,#32b3b7)"></div>
<div class="a" style="left:0;top:24px;width:180px;height:2px;background:linear-gradient(90deg,#5975be,#4d71cf 17.48%,#32b3b7)"></div>
<div class="a" style="left:0;top:26px;width:180px;height:2px;background:linear-gradient(90deg,#5b77bc,#4d73ce 18.88%,#33b4b8)"></div>
<div class="a" style="left:0;top:28px;width:180px;height:2px;background:linear-gradient(90deg,#5c78bb,#4e74ce 20.28%,#34b4b8)"></div>
<div class="a" style="left:0;top:30px;width:180px;height:2px;background:linear-gradient(90deg,#5d7ab9,#4e76ce 21.68%,#35b4b8)"></div>
<div class="a" style="left:0;top:32px;width:180px;height:2px;background:linear-gradient(90deg,#5f7cb8,#4e77ce 23.08%,#36b5b9)"></div>
<div class="a" style="left:0;top:34px;width:180px;height:2px;background:linear-gradient(90deg,#607db7,#4f78ce 24.48%,#37b5b9)"></div>
<div class="a" style="left:0;top:36px;width:180px;height:2px;background:linear-gradient(90deg,#617fb5,#4f7ace 25.87%,#38b5b9)"></div>
<div class="a" style="left:0;top:38px;width:180px;height:2px;background:linear-gradient(90deg,#6381b4,#507bce 27.27%,#38b5b9)"></div>
<div class="a" style="left:0;top:40px;width:180px;height:2px;background:linear-gradient(90deg,#6482b2,#507dce 28.67%,#39b6ba)"></div>
<div class="a" style="left:0;top:42px;width:180px;height:2px;background:linear-gradient(90deg,#6584b1,#507ece 30.07%,#3ab6ba)"></div>
<div class="a" style="left:0;top:44px;width:180px;height:2px;background:linear-gradient(90deg,#6786af,#517fcd 31.47%,#3bb6ba)"></div>
<div class="a" style="left:0;top:46px;width:180px;height:2px;background:linear-gradient(90deg,#6887ae,#5181cd 32.87%,#3cb7bb)"></div>
<div class="a" style="left:0;top:48px;width:180px;height:2px;background:linear-gradient(90deg,#6a89ac,#5282cd 34.27%,#3db7bb)"></div>
<div class="a" style="left:0;top:50px;width:180px;height:2px;background:linear-gradient(90deg,#6b8bab,#5284cd 35.66%,#3db7bb)"></div>
<div class="a" style="left:0;top:52px;width:180px;height:2px;background:linear-gradient(90deg,#6c8ca9,#5285cd 37.06%,#3eb7bb)"></div>
<div class="a" style="left:0;top:54px;width:180px;height:2px;background:linear-gradient(90deg,#6e8ea8,#5386cd 38.46%,#3fb8bc)"></div>
<div class="a" style="left:0;top:56px;width:180px;height:2px;background:linear-gradient(90deg,#6f90a7,#5388cd 39.86%,#40b8bc)"></div>
<div class="a" style="left:0;top:58px;width:180px;height:2px;background:linear-gradient(90deg,#7092a5,#5489cd 41.26%,#41b8bc)"></div>
<div class="a" style="left:0;top:60px;width:180px;height:2px;background:linear-gradient(90deg,#7293a4,#548bcd 42.66%,#42b9bd)"></div>
<div class="a" style="left:0;top:62px;width:180px;height:2px;background:linear-gradient(90deg,#7395a2,#548ccc 44.06%,#42b9bd)"></div>
<div class="a" style="left:0;top:64px;width:180px;height:2px;background:linear-gradient(90deg,#7597a1,#558dcc 45.45%,#43b9bd)"></div>
<div class="a" style="left:0;top:66px;width:180px;height:2px;background:linear-gradient(90deg,#76989f,#558fcc 46.85%,#44b9bd)"></div>
<div class="a" style="left:0;top:68px;width:180px;height:2px;background:linear-gradient(90deg,#779a9e,#5690cc 48.25%,#45babe)"></div>
<div class="a" style="left:0;top:70px;width:180px;height:2px;background:linear-gradient(90deg,#799c9c,#5692cc 49.65%,#46babe)"></div>
<div class="a" style="left:0;top:72px;width:180px;height:2px;background:linear-gradient(90deg,#7a9d9b,#5693cc 51.05%,#47babe)"></div>
<div class="a" style="left:0;top:74px;width:180px;height:2px;background:linear-gradient(90deg,#7b9f99,#5794cc 52.45%,#47babe)"></div>
<div class="a" style="left:0;top:76px;width:180px;height:2px;background:linear-gradient(90deg,#7da198,#5796cc 53.85%,#48bbbf)"></div>
<div class="a" style="left:0;top:78px;width:180px;height:2px;background:linear-gradient(90deg,#7ea297,#5797cc 55.24%,#49bbbf)"></div>
<div class="a" style="left:0;top:80px;width:180px;height:2px;background:linear-gradient(90deg,#80a495,#5899cb 56.64%,#4abbbf)"></div>
<div class="a" style="left:0;top:82px;width:180px;height:2px;background:linear-gradient(90deg,#81a694,#589acb 58.04%,#4bbcc0)"></div>
<div class="a" style="left:0;top:84px;width:180px;height:2px;background:linear-gradient(90deg,#82a792,#599bcb 59.44%,#4cbcc0)"></div>
<div class="a" style="left:0;top:86px;width:180px;height:2px;background:linear-gradient(90deg,#84a991,#599dcb 60.84%,#4dbcc0)"></div>
<div class="a" style="left:0;top:88px;width:180px;height:2px;background:linear-gradient(90deg,#85ab8f,#599ecb 62.24%,#4dbcc0)"></div>
<div class="a" style="left:0;top:90px;width:180px;height:2px;background:linear-gradient(90deg,#86ac8e,#5aa0cb 63.64%,#4ebdc1)"></div>
<div class="a" style="left:0;top:92px;width:180px;height:2px;background:linear-gradient(90deg,#88ae8c,#5aa1cb 65.03%,#4fbdc1)"></div>
<div class="a" style="left:0;top:94px;width:180px;height:2px;background:linear-gradient(90deg,#89b08b,#5ba2cb 66.43%,#50bdc1)"></div>
<div class="a" style="left:0;top:96px;width:180px;height:2px;background:linear-gradient(90deg,#8ab189,#5ba4cb 67.83%,#51bec2)"></div>
<div class="a" style="left:0;top:98px;width:180px;height:2px;background:linear-gradient(90deg,#8cb388,#5ba5ca 69.23%,#52bec2)"></div>
<div class="a" style="left:0;top:100px;width:180px;height:2px;background:linear-gradient(90deg,#8db587,#5ca7ca 70.63%,#52bec2)"></div>
<div class="a" style="left:0;top:102px;width:180px;height:2px;background:linear-gradient(90deg,#8fb685,#5ca8ca 72.03%,#53bec2)"></div>
<div class="a" style="left:0;top:104px;width:180px;height:2px;background:linear-gradient(90deg,#90b884,#5da9ca 73.43%,#54bfc3)"></div>
<div class="a" style="left:0;top:106px;width:180px;height:2px;background:linear-gradient(90deg,#91ba82,#5dabca 74.83%,#55bfc3)"></div>
<div class="a" style="left:0;top:108px;width:180px;height:2px;background:linear-gradient(90deg,#93bb81,#5dacca 76.22%,#56bfc3)"></div>
<div class="a" style="left:0;top:110px;width:180px;height:2px;background:linear-gradient(90deg,#94bd7f,#5eaeca 77.62%,#57c0c4)"></div>
<div class="a" style="left:0;top:112px;width:180px;height:2px;background:linear-gradient(90deg,#95bf7e,#5eafca 79.02%,#57c0c4)"></div>
<div class="a" style="left:0;top:114px;width:180px;height:2px;background:linear-gradient(90deg,#97c17c,#5fb0ca 80.42%,#58c0c4)"></div>
<div class="a" style="left:0;top:116px;width:180px;height:2px;background:linear-gradient(90deg,#98c27b,#5fb2c9 81.82%,#59c0c4)"></div>
<div class="a" style="left:0;top:118px;width:180px;height:2px;background:linear-gradient(90deg,#9ac479,#5fb3c9 83.22%,#5ac1c5)"></div>
<div class="a" style="left:0;top:120px;width:180px;height:2px;background:linear-gradient(90deg,#9bc678,#60b5c9 84.62%,#5bc1c5)"></div>
<div class="a" style="left:0;top:122px;width:180px;height:2px;background:linear-gradient(90deg,#9cc777,#60b6c9 86.01%,#5cc1c5)"></div>
<div class="a" style="left:0;top:124px;width:180px;height:2px;background:linear-gradient(90deg,#9ec975,#60b7c9 87.41%,#5cc1c5)"></div>
<div class="a" style="left:0;top:126px;width:180px;height:2px;background:linear-gradient(90deg,#9fcb74,#61b9c9 88.81%,#5dc2c6)"></div>
<div class="a" style="left:0;top:128px;width:180px;height:2px;background:linear-gradient(90deg,#a0cc72,#61bac9 90.21%,#5ec2c6)"></div>
<div class="a" style="left:0;top:130px;width:180px;height:2px;background:linear-gradient(90deg,#a2ce71,#62bcc9 91.61%,#5fc2c6)"></div>
<div class="a" style="left:0;top:132px;width:180px;height:2px;background:linear-gradient(90deg,#a3d06f,#62bdc9 93.01%,#60c3c7)"></div>
<div class="a" style="left:0;top:134px;width:180px;height:2px;background:linear-gradient(90deg,#a5d16e,#62bec8 94.41%,#61c3c7)"></div>
<div class="a" style="left:0;top:136px;width:180px;height:2px;background:linear-gradient(90deg,#a6d36c,#63c0c8 95.80%,#61c3c7)"></div>
<div class="a" style="left:0;top:138px;width:180px;height:2px;background:linear-gradient(90deg,#a7d56b,#63c1c8 97.20%,#62c3c7)"></div>
<div class="a" style="left:0;top:140px;width:180px;height:2px;background:linear-gradient(90deg,#a9d669,#64c3c8 98.60%,#63c4c8)"></div>
<div class="a" style="left:0;top:142px;width:180px;height:2px;background:linear-gradient(90deg,#aad868,#64c4c8 100.00%,#64c4c8)"></div>
</div>
<svg style="left:0;top:0" width="1331" height="1013"><defs><clipPath id="pv"><rect x="1111" y="76" width="180" height="143"/></clipPath><clipPath id="ph2"><polygon points="1187.6,118.1 1253.2,91.6 1292.6,189.2 1227.0,215.7"/></clipPath></defs><g clip-path="url(#pv)"><g clip-path="url(#ph2)"><rect x="1111" y="76" width="180" height="143" fill="#cfcfcf"/><polygon points="1219.0,192.8 1221.85,190.525 1227.5,191.65 1236.025,192.8 1245.675,178.0 1248.5,174.05 1253.075,170.075 1258.75,172.35 1264.425,167.825 1270.1,163.25 1272.95,161.0 1281.45,161.0 1292.75,184.75 1292.75,187.675 1270.1,195.075 1247.4,204.15 1225.825,210.975 1214.0,211.0" fill="#6a6e6e" /><polygon points="1224.0,211.5 1225.825,210.975 1247.4,204.15 1270.1,195.075 1292.75,187.0 1292.75,191.0 1226.375,215.25 1224.0,216.0" fill="#a0a4a4" /><polygon points="1201.175,147.025 1204.425,143.225 1207.15,141.6 1206.6,139.425 1209.85,137.25 1214.2,135.1 1216.925,132.925 1217.45,129.65 1215.275,126.4 1213.125,121.525 1212.575,116.625 1214.2,111.75 1217.45,108.5 1222.35,105.225 1228.325,103.05 1234.3,102.525 1240.25,104.15 1244.05,106.85 1242.425,108.5 1239.175,110.65 1237.0,113.375 1231.575,113.925 1225.05,116.625 1222.875,119.875 1222.875,124.225 1220.725,126.4 1219.625,129.65 1219.625,134.0 1216.925,137.25 1213.125,139.425 1207.675,143.225 1202.25,148.125" fill="#888c8c" /><polygon points="1222.875,119.875 1224.5,116.625 1229.4,114.175 1234.825,113.925 1237.55,115.55 1239.175,117.725 1238.625,119.35 1240.25,124.25 1238.075,125.85 1235.925,126.95 1237.0,128.0 1231.575,128.575 1225.05,128.025 1224.5,126.4 1222.875,124.25" fill="#6a6e6e" /><polygon points="1225.05,128.025 1231.575,128.575 1237.0,128.025 1242.425,128.025 1245.875,126.9375 1248.225,125.525 1250.575,123.1875 1255.25,122.5 1259.95,123.65 1264.625,127.4 1268.375,132.5625 1271.2,140.0625 1272.125,146.625 1271.2,152.25 1268.375,156.0 1264.625,157.4 1262.75,156.9375 1265.5625,159.75 1266.125,163.25 1268.975,167.825 1271.25,175.2 1272.95,182.575 1275.2,187.675 1281.45,189.4 1287.125,189.95 1284.3,191.65 1275.775,192.8 1270.1,194.5 1268.975,189.4 1267.825,183.7 1264.425,178.025 1262.725,172.35 1258.75,169.5 1253.075,166.675 1245.675,166.675 1245.125,175.2 1244.0,182.575 1246.825,190.5 1248.5,197.35 1253.075,198.5 1255.9,200.75 1250.8,203.0 1246.25,204.15 1245.125,198.5 1240.575,191.1 1237.175,183.7 1236.6,176.9 1233.75,169.5 1230.925,162.7 1230.325,159.65 1229.875,154.325 1229.425,150.75 1226.75,148.5 1223.2,146.75 1222.325,150.75 1221.425,157.875 1219.225,162.325 1221.0,169.425 1217.875,169.875 1211.675,171.2 1211.675,168.5 1213.0,164.5 1214.325,156.55 1215.225,147.65 1215.65,141.0 1215.275,139.425 1217.45,135.1 1221.8,132.925" fill="#545858" /><polygon points="1252.0,125.5 1256.0,124.5 1260.5,125.5 1264.0,129.0 1267.0,134.0 1269.0,140.5 1269.75,146.5 1268.75,151.5 1266.0,154.5 1262.5,155.0 1259.0,151.0 1256.0,144.75 1252.75,136.0 1251.0,129.75" fill="#404545" /><polygon points="1226.5,129.25 1232.75,129.5 1239.0,129.0 1245.25,128.5 1250.25,129.0 1251.5,133.5 1250.25,141.0 1248.0,148.5 1245.25,154.0 1239.0,156.0 1233.5,157.75 1230.5,158.5 1229.75,152.25 1228.0,148.0 1225.0,145.5 1223.5,139.0 1224.0,132.25" fill="#606565" /><polygon points="1211.75,169.5 1220.55,164.1 1245.4,153.425 1247.1875,153.875 1246.3,155.2 1221.425,166.75 1213.25,171.5" fill="#8c9090" /></g></g><rect x="1118" y="80" width="1" height="135" fill="#a83050"/><g fill="#e8f040"><rect x="1134" y="94" width="1.5" height="1.5"/><rect x="1205" y="205" width="1.5" height="1.5"/><rect x="1276" y="205" width="1.5" height="1.5"/><rect x="1276" y="100" width="1.5" height="1.5"/></g><ellipse cx="1134" cy="93" rx="6" ry="4" fill="#2030c0" stroke="#e0e0ff" stroke-width="0.6" stroke-dasharray="1 1"/></svg>
<div class="t" style="left:1161px;top:89px;font-size:7px;line-height:8px;color:#c8d0f0">21:16</div>
<div class="t" style="left:1134px;top:94px;font-size:11px;line-height:12px;color:#e02030;letter-spacing:-0.3px"><span style="font-size:14px">P</span>roba szöveget</div>
<div class="t" style="left:1134px;top:109px;font-size:10px;line-height:12px;color:#f0f040;letter-spacing:0px">adunk be a</div>
<div class="a" style="left:1077px;top:235px;width:249px;height:21px;background:#3f3f3f;"></div>
<div class="ph" style="left:1097px;top:261px;width:200px">PROGRAM INFO</div>
<div class="a" style="left:1078px;top:280px;width:80px;height:14px;overflow:hidden"><div class="il" style="right:0;top:0;">Start</div></div>
<div class="a" style="left:1168px;top:280px;width:153px;height:14px;overflow:hidden"><div class="il" style="left:0;top:0"><span style="letter-spacing:0.75px">2018</span>-<span style="letter-spacing:0.75px">1</span>-<span style="letter-spacing:0.75px">14</span> <span style="letter-spacing:0.75px">21</span>:<span style="letter-spacing:0.75px">6</span>  <span style="letter-spacing:0.75px">2</span>.<span style="letter-spacing:0.75px">0</span>.<span style="letter-spacing:0.75px">0</span>.<span style="letter-spacing:0.75px">1</span> <span style="letter-spacing:0.75px">2018</span></div></div>
<div class="a" style="left:1078px;top:299px;width:80px;height:14px;overflow:hidden"><div class="il" style="right:0;top:0;">Aktuális idő</div></div>
<div class="a" style="left:1168px;top:299px;width:153px;height:14px;overflow:hidden"><div class="il" style="left:0;top:0"><span style="letter-spacing:0.75px">2018</span>-<span style="letter-spacing:0.75px">01</span>-<span style="letter-spacing:0.75px">14</span> <span style="letter-spacing:0.75px">21</span>:<span style="letter-spacing:0.75px">15</span>:<span style="letter-spacing:0.75px">39</span></div></div>
<div class="a" style="left:1078px;top:318px;width:80px;height:14px;overflow:hidden"><div class="il" style="right:0;top:0;">Eltelt idő</div></div>
<div class="a" style="left:1168px;top:318px;width:153px;height:14px;overflow:hidden"><div class="il" style="left:0;top:0"><span style="letter-spacing:0.75px">00</span>:<span style="letter-spacing:0.75px">09</span>:<span style="letter-spacing:0.75px">14</span> (Re:<span style="letter-spacing:0.75px">00</span>:<span style="letter-spacing:0.75px">09</span>:<span style="letter-spacing:0.75px">14</span>)</div></div>
<div class="a" style="left:1078px;top:337px;width:80px;height:14px;overflow:hidden"><div class="il" style="right:0;top:0;left:1px;right:auto;">Képernyő frissi</div></div>
<div class="a" style="left:1168px;top:337px;width:153px;height:14px;overflow:hidden"><div class="il" style="left:0;top:0"><span style="letter-spacing:0.75px">25</span>,<span style="letter-spacing:0.75px">02</span> f/sec  RD=<span style="letter-spacing:0.75px">1</span></div></div>
<div class="a" style="left:1078px;top:356px;width:80px;height:14px;overflow:hidden"><div class="il" style="right:0;top:0;left:1px;right:auto;">Aktuális sylus c</div></div>
<div class="a" style="left:1078px;top:375px;width:80px;height:14px;overflow:hidden"><div class="il" style="right:0;top:0;">Hang pozició</div></div>
<div class="a" style="left:1168px;top:375px;width:153px;height:14px;overflow:hidden"><div class="il" style="left:0;top:0"><span style="letter-spacing:0.75px">00</span>:<span style="letter-spacing:0.75px">09</span>:<span style="letter-spacing:0.75px">13</span>  [hang Fent]</div></div>
<div class="a" style="left:1078px;top:394px;width:80px;height:14px;overflow:hidden"><div class="il" style="right:0;top:0;">Aktuális adás</div></div>
<div class="a" style="left:1078px;top:413px;width:80px;height:14px;overflow:hidden"><div class="il" style="right:0;top:0;">Adás pozició</div></div>
<div class="a" style="left:1078px;top:432px;width:80px;height:14px;overflow:hidden"><div class="il" style="right:0;top:0;">Státusz</div></div>
<div class="a" style="left:1168px;top:432px;width:153px;height:14px;overflow:hidden"><div class="il" style="left:0;top:0">Decklink Show started</div></div>
<div class="a" style="left:1078px;top:451px;width:80px;height:14px;overflow:hidden"><div class="il" style="right:0;top:0;">Decklink</div></div>
<div class="a" style="left:1168px;top:451px;width:153px;height:14px;overflow:hidden"><div class="il" style="left:0;top:0">Buffered frame: <span style="letter-spacing:0.75px">15</span></div></div>
<div class="a" style="left:1078px;top:470px;width:80px;height:14px;overflow:hidden"><div class="il" style="right:0;top:0;left:1px;right:auto;">Sceduled frame</div></div>
<div class="a" style="left:1168px;top:470px;width:153px;height:14px;overflow:hidden"><div class="il" style="left:0;top:0"><span style="letter-spacing:0.75px">13795</span>  <span style="letter-spacing:0.75px">13781</span></div></div>
<div class="a" style="left:1078px;top:489px;width:80px;height:14px;overflow:hidden"><div class="il" style="right:0;top:0;left:1px;right:auto;">Decklink frame</div></div>
<div class="a" style="left:1168px;top:489px;width:153px;height:14px;overflow:hidden"><div class="il" style="left:0;top:0">Nv=<span style="letter-spacing:0.75px">0</span> v= <span style="letter-spacing:0.75px">0</span> A=<span style="letter-spacing:0.75px">0</span> b=<span style="letter-spacing:0.75px">0</span></div></div>
<div class="a" style="left:1078px;top:508px;width:80px;height:14px;overflow:hidden"><div class="il" style="right:0;top:0;">Rel frame</div></div>
<div class="a" style="left:1168px;top:508px;width:153px;height:14px;overflow:hidden"><div class="il" style="left:0;top:0"><span style="letter-spacing:0.75px">14</span></div></div>
<div class="a" style="left:1078px;top:527px;width:80px;height:14px;overflow:hidden"><div class="il" style="right:0;top:0;">Audio Frame</div></div>
<div class="a" style="left:1078px;top:546px;width:80px;height:14px;overflow:hidden"><div class="il" style="right:0;top:0;">Kimenet</div></div>
<div class="a" style="left:1168px;top:546px;width:153px;height:14px;overflow:hidden"><div class="il" style="left:0;top:0">Kepujsag</div></div>
<div class="a" style="left:1078px;top:565px;width:80px;height:14px;overflow:hidden"><div class="il" style="right:0;top:0;left:1px;right:auto;">Video frame dı</div></div>
<div class="a" style="left:1168px;top:565px;width:153px;height:14px;overflow:hidden"><div class="il" style="left:0;top:0">In: <span style="letter-spacing:0.75px">0</span> Out:<span style="letter-spacing:0.75px">0</span> err<span style="letter-spacing:0.75px">1</span>=<span style="letter-spacing:0.75px">0</span> err<span style="letter-spacing:0.75px">2</span>=<span style="letter-spacing:0.75px">0</span></div></div>
<div class="a" style="left:1078px;top:584px;width:80px;height:14px;overflow:hidden"><div class="il" style="right:0;top:0;">Hálozati adat</div></div>
<div class="a" style="left:1078px;top:603px;width:80px;height:14px;overflow:hidden"><div class="il" style="right:0;top:0;left:1px;right:auto;">Halozat adat pc</div></div>
<div class="a" style="left:1078px;top:622px;width:80px;height:14px;overflow:hidden"><div class="il" style="right:0;top:0;left:1px;right:auto;">MPEG2 UDP Inf</div></div>
<div class="a" style="left:1078px;top:641px;width:80px;height:14px;overflow:hidden"><div class="il" style="right:0;top:0;">Sound Player</div></div>
<div class="ph" style="left:1097px;top:660px;width:200px">LEJÁTSZÓ GÉP HIBALISTA</div>
<div class="ph" style="left:1097px;top:751px;width:200px">LOG</div>
<div class="il" style="left:1086px;top:770px"><span style="letter-spacing:0.75px">21</span>:<span style="letter-spacing:0.75px">06</span>:<span style="letter-spacing:0.75px">29</span></div>
<div class="a" style="left:1148px;top:770px;width:173px;height:14px;overflow:hidden"><div class="il" style="left:0;top:0">Disable group scoll</div></div>
<div class="il" style="left:1086px;top:788px"><span style="letter-spacing:0.75px">21</span>:<span style="letter-spacing:0.75px">06</span>:<span style="letter-spacing:0.75px">29</span></div>
<div class="a" style="left:1148px;top:788px;width:173px;height:14px;overflow:hidden"><div class="il" style="left:0;top:0">start off fade</div></div>
<div class="il" style="left:1086px;top:806px"><span style="letter-spacing:0.75px">21</span>:<span style="letter-spacing:0.75px">06</span>:<span style="letter-spacing:0.75px">49</span></div>
<div class="a" style="left:1148px;top:806px;width:173px;height:14px;overflow:hidden"><div class="il" style="left:0;top:0">OnLostDevice</div></div>
<div class="il" style="left:1086px;top:824px"><span style="letter-spacing:0.75px">21</span>:<span style="letter-spacing:0.75px">06</span>:<span style="letter-spacing:0.75px">49</span></div>
<div class="a" style="left:1148px;top:824px;width:173px;height:14px;overflow:hidden"><div class="il" style="left:0;top:0">OnLostDevice end</div></div>
<div class="il" style="left:1086px;top:842px"><span style="letter-spacing:0.75px">21</span>:<span style="letter-spacing:0.75px">06</span>:<span style="letter-spacing:0.75px">49</span></div>
<div class="a" style="left:1148px;top:842px;width:173px;height:14px;overflow:hidden"><div class="il" style="left:0;top:0">OnResetDevice old:81d32c0 new</div></div>
<div class="a" style="left:10px;top:729px;width:268px;height:50px;background:#555;"></div>
<div class="a" style="left:10px;top:729px;width:10px;height:50px;background:#8a8a8a;"></div>
<div class="a" style="left:44px;top:734px;width:68px;height:20px;background:#8c8c8c;"></div>
<div class="t" style="left:46px;top:734px;color:#f8f8f8;font-size:11px">375</div>
<div class="a" style="left:97px;top:735px;width:14px;height:18px;background:#f0f0f0;border:1px solid #c8c8c8"></div>
<svg style="left:98px;top:736px" width="12" height="16" viewBox="0 0 12 16"><path d="M3 6.5L6 3L9 6.5Z" fill="#111"/><path d="M3 10L6 13.5L9 10Z" fill="#111"/><path d="M1 8.2H11" stroke="#bbb" stroke-width="0.8"/></svg>
<div class="a" style="left:44px;top:760px;width:68px;height:20px;background:#8c8c8c;"></div>
<div class="t" style="left:46px;top:760px;color:#f8f8f8;font-size:11px">101</div>
<div class="a" style="left:97px;top:761px;width:14px;height:18px;background:#f0f0f0;border:1px solid #c8c8c8"></div>
<svg style="left:98px;top:762px" width="12" height="16" viewBox="0 0 12 16"><path d="M3 6.5L6 3L9 6.5Z" fill="#111"/><path d="M3 10L6 13.5L9 10Z" fill="#111"/><path d="M1 8.2H11" stroke="#bbb" stroke-width="0.8"/></svg>
<div class="a" style="left:188px;top:734px;width:68px;height:20px;background:#8c8c8c;"></div>
<div class="t" style="left:190px;top:734px;color:#f8f8f8;font-size:11px">283</div>
<div class="a" style="left:241px;top:735px;width:14px;height:18px;background:#f0f0f0;border:1px solid #c8c8c8"></div>
<svg style="left:242px;top:736px" width="12" height="16" viewBox="0 0 12 16"><path d="M3 6.5L6 3L9 6.5Z" fill="#111"/><path d="M3 10L6 13.5L9 10Z" fill="#111"/><path d="M1 8.2H11" stroke="#bbb" stroke-width="0.8"/></svg>
<div class="a" style="left:188px;top:760px;width:68px;height:20px;background:#8c8c8c;"></div>
<div class="t" style="left:190px;top:760px;color:#f8f8f8;font-size:11px">421</div>
<div class="a" style="left:241px;top:761px;width:14px;height:18px;background:#f0f0f0;border:1px solid #c8c8c8"></div>
<svg style="left:242px;top:762px" width="12" height="16" viewBox="0 0 12 16"><path d="M3 6.5L6 3L9 6.5Z" fill="#111"/><path d="M3 10L6 13.5L9 10Z" fill="#111"/><path d="M1 8.2H11" stroke="#bbb" stroke-width="0.8"/></svg>
<div class="t" style="left:23px;top:736px;color:#f0f0f0;font-size:10.5px;">X=</div>
<div class="t" style="left:23px;top:762px;color:#f0f0f0;font-size:10.5px;">Y=</div>
<div class="t" style="left:130px;top:736px;color:#f0f0f0;font-size:10px;">Szélesség=</div>
<div class="t" style="left:130px;top:762px;color:#f0f0f0;font-size:10px;">Magasság=</div>
<div class="a" style="left:11px;top:789px;width:486px;height:193px;background:#555;"></div>
<div class="a" style="left:11px;top:789px;width:10px;height:193px;background:#8a8a8a;"></div>
<div class="a" style="left:23px;top:791px;width:82px;height:20px;background:#3d3d3d;"></div>
<div class="pl" style="left:28px;top:794px;color:#f4f4f4">Stilus oldalak</div>
<div class="pl" style="left:111px;top:794px;color:#a8a8a8">Tárolt Presetek</div>
<div class="t" style="left:26px;top:812px;color:#f0f0f0;font-size:12.5px;">Stilusoldalak.</div>
<div class="a" style="left:26px;top:830px;width:185px;height:15px;background:#0078d7;"></div>
<div class="t" style="left:31px;top:831px;color:#fff;font-size:12.5px;">&lt; nincs &gt;</div>
<div class="a" style="left:1px;top:988px;width:1329px;height:24px;background:#8e8e8e;"></div>
<div class="a" style="left:41px;top:982px;width:4px;height:6px;background:#454545;"></div>
<svg style="left:6px;top:990px" width="24" height="22" viewBox="0 0 24 22"><g stroke="#d0d0d0" stroke-width="1.2"><path d="M10 6H20M11 10H22M12 14H24M13 18H24"/></g><path d="M2.5 1.5V16L6 12.5L9 19L11 18L8 11.5H13Z" fill="#fff" stroke="#101060" stroke-width="1"/></svg>
<div class="t" style="left:40px;top:994px;color:#141414;font-size:11.2px;">14:456</div>
<div class="t" style="left:104.7px;top:994px;color:#141414;font-size:11.2px;">720:576</div>
<svg style="left:166px;top:992px" width="28" height="16" viewBox="0 0 28 16"><path d="M6 15V2M2.5 5.5L6 1.5L9.5 5.5" fill="none" stroke="#111" stroke-width="1.4"/><path d="M12 8.5H26M22.5 5L26.5 8.5L22.5 12" fill="none" stroke="#111" stroke-width="1.4"/></svg>
<div class="t" style="left:204px;top:994px;color:#141414;font-size:11.2px;">x=375 y=101</div>
<svg style="left:292px;top:992px" width="28" height="16" viewBox="0 0 28 16"><path d="M6 1.5V14.5M2.5 5L6 1.5L9.5 5M2.5 11L6 14.5L9.5 11" fill="none" stroke="#111" stroke-width="1.6"/><path d="M12 8H26M15 5L11.5 8L15 11M23 5L26.5 8L23 11" fill="none" stroke="#111" stroke-width="1.3"/></svg>
<div class="t" style="left:340px;top:994px;color:#141414;font-size:11.2px;">sz=283 m=421</div>
<div class="t" style="left:439.5px;top:994px;color:#141414;font-size:11.2px;">x=1,24 y=0,94</div>
<svg style="left:518px;top:991px" width="14" height="16" viewBox="0 0 14 16"><path d="M12 4C8 0 2 2 3 8L1 8L4.5 12L8 8L5.5 8C5 5 9 3 11 6Z" fill="#20e020"/><path d="M5 10C6 14 10 15 12 13" stroke="#20e020" stroke-width="2.5" fill="none"/></svg>
<div class="t" style="left:532px;top:995px;font-size:9px;font-weight:bold;color:#111">Undo</div>
<div class="t" style="left:561px;top:994px;color:#141414;font-size:11.2px;">7</div>
<div class="t" style="left:585px;top:994px;color:#141414;font-size:11.2px;">100 %</div>
<div class="a" style="left:621px;top:992px;width:59px;height:18px;background:#e6e6e6;"></div>
<div class="t" style="left:624px;top:994px;font-size:9.5px;color:#222">&lt;nincs&gt;</div>
<svg style="left:667px;top:997px" width="10" height="7" viewBox="0 0 10 7"><path d="M1 1.5L5 5.5L9 1.5" fill="none" stroke="#333" stroke-width="1.2"/></svg>
<div class="a" style="left:682px;top:991px;width:1px;height:20px;background:#b4b4b4;"></div>
<svg style="left:685px;top:992px" width="19" height="18" viewBox="0 0 19 18"><rect x="1" y="1" width="17" height="16" fill="none" stroke="#fff" stroke-width="1.6"/><path d="M1 11H18M13 1V11M7 11V17" stroke="#fff" stroke-width="1.4"/><rect x="2" y="2" width="10.5" height="8.5" fill="#7a7a7a"/></svg>
<div class="a" style="left:706px;top:991px;width:1px;height:20px;background:#b4b4b4;"></div>
<svg style="left:709px;top:992px" width="20" height="18" viewBox="0 0 20 18"><rect x="1" y="1" width="18" height="10" fill="none" stroke="#fff" stroke-width="1.6"/><path d="M8 1V11M8 6H19" stroke="#fff" stroke-width="1.4"/><text x="10" y="17.5" text-anchor="middle" font-family="Liberation Sans" font-weight="bold" font-size="8.5" fill="#fff" stroke="#000" stroke-width="1.6" paint-order="stroke">Sty</text></svg>
<div class="a" style="left:731px;top:991px;width:1px;height:20px;background:#b4b4b4;"></div>
<div class="t" style="left:740px;top:994px;color:#101830;font-size:11.5px;">Letölthetö:2.0.0.1 ,Érvényes Jul &nbsp;1 2018 12:00AM-ig.</div>
<svg style="left:1314px;top:999px" width="14" height="12"><g fill="#d8d8d8"><rect x="8" y="2" width="2" height="2"/><rect x="5" y="5" width="2" height="2"/><rect x="8" y="5" width="2" height="2"/><rect x="2" y="8" width="2" height="2"/><rect x="5" y="8" width="2" height="2"/><rect x="8" y="8" width="2" height="2"/></g></svg>
</body></html>
